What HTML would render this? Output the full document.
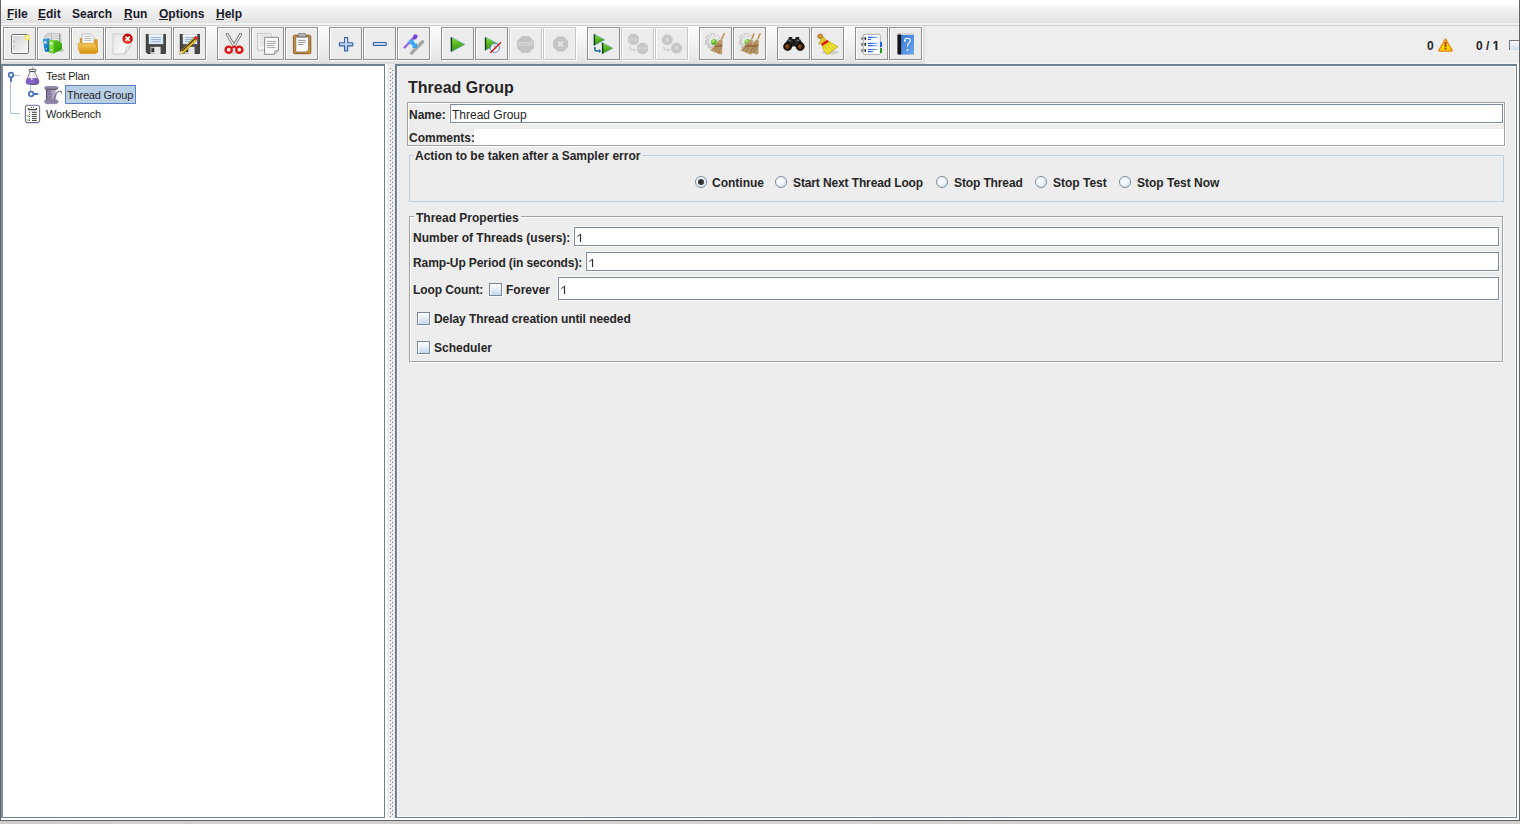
<!DOCTYPE html>
<html><head><meta charset="utf-8">
<style>
*{margin:0;padding:0;box-sizing:border-box}
html,body{width:1520px;height:824px;overflow:hidden;background:linear-gradient(90deg,#cdcdcd,#d4d4d4 50%,#cfcfcf);font-family:"Liberation Sans",sans-serif;color:#262626}
.a{position:absolute}
.t{position:absolute;white-space:nowrap;line-height:12px;font-size:12px}
.b{font-weight:bold}
.r11{font-size:11px;line-height:11px;letter-spacing:-0.2px}
#win{position:absolute;left:0;top:0;width:1520px;height:821px;background:#eeeeee;border-left:1px solid #646464;border-right:1px solid #646464;border-bottom:1px solid #646464}
#menubar{position:absolute;left:1px;top:0;width:1518px;height:25px;background:linear-gradient(#ffffff 0px,#ffffff 3px,#f3f3f3 8px,#e2e2e2 23px,#f2f2f2 23px,#f2f2f2 24px)}
#menuline{position:absolute;left:1px;top:25px;width:1518px;height:1px;background:#cccccc}
.menu{position:absolute;top:8px;font-weight:bold;font-size:12px;line-height:12px;white-space:nowrap;color:#1a1a2a}
.menu u{text-decoration:none;border-bottom:1px solid #222;}
.btn{position:absolute;top:27px;width:33px;height:33px;border:1px solid #8e8e8e;background:#ececec;box-shadow:inset 1px 1px 0 #ffffff,1px 1px 0 #ffffff}
.btn.dis{border-color:#c6c6c6}
.btn svg{position:absolute;left:5px;top:5px}
.panel{position:absolute;top:64px;height:754px}
.etch{position:absolute;border:1px solid #a0a0a0;box-shadow:inset 1px 1px 0 #fff,1px 1px 0 #fff}
.fld{position:absolute;background:#fff;border:1px solid #7b8b9b;box-shadow:-1px -1px 0 #fafafa,1px 1px 0 #fff}
.chk{position:absolute;width:13px;height:13px;border:1px solid #76879b;background:linear-gradient(#ffffff 0%,#f6f9fc 20%,#c4d7eb 100%);box-shadow:inset 1px 1px 0 #fff,1px 1px 0 #fafafa}
.rad{position:absolute;width:12px;height:12px;border-radius:50%;border:1px solid #7b8b9b;background:radial-gradient(circle at 35% 30%,#ffffff 0%,#f0f6fc 45%,#c8dcf0 100%)}
.dots{position:absolute;left:387px;top:64px;width:8px;height:755px;background:#ececec}
</style></head>
<body>
<div id="win"></div>
<div id="menubar"></div>
<div id="menuline"></div>
<div class="menu" style="left:7px">File</div>
<div class="menu" style="left:38px">Edit</div>
<div class="menu" style="left:72px">Search</div>
<div class="menu" style="left:124px">Run</div>
<div class="menu" style="left:159px">Options</div>
<div class="menu" style="left:216px">Help</div>
<div class="a" style="left:7px;top:19px;width:6px;height:1px;background:#2a2a2a"></div>
<div class="a" style="left:38px;top:19px;width:7px;height:1px;background:#2a2a2a"></div>
<div class="a" style="left:124px;top:19px;width:8px;height:1px;background:#2a2a2a"></div>
<div class="a" style="left:159px;top:19px;width:9px;height:1px;background:#2a2a2a"></div>
<div class="a" style="left:216px;top:19px;width:8px;height:1px;background:#2a2a2a"></div>

<!-- toolbar -->
<div class="a" style="left:1px;top:26px;width:924px;height:37px;background:linear-gradient(#ffffff 0px,#fbfbfb 3px,#e6e6e6 34px,#e0e0e0 37px)"></div>
<div class="a" style="left:1px;top:63px;width:924px;height:1px;background:#dedad6"></div>
<div class="a" style="left:923px;top:26px;width:2px;height:37px;background:#e0e0e0"></div>
<div class="a" style="left:925px;top:63px;width:594px;height:1px;background:#f5f5f5"></div>

<div class="btn" style="left:3px"><svg width="22" height="22" viewBox="0 0 22 22"><defs><linearGradient id="gNew" x1="0" y1="0" x2="1" y2="1"><stop offset="0" stop-color="#cfcfcf"/><stop offset="1" stop-color="#fbfbfb"/></linearGradient></defs>
<rect x="2.5" y="1.5" width="17" height="19" rx="1.5" fill="url(#gNew)" stroke="#6e6e6e"/>
<rect x="3.5" y="2.5" width="15" height="17" fill="none" stroke="#fff" stroke-width="0.8"/>
<circle cx="4.8" cy="8.6" r="0.7" fill="#999"/><circle cx="4.8" cy="13.6" r="0.7" fill="#999"/>
<circle cx="18.3" cy="4.4" r="2.1" fill="#fffbe0" stroke="#f2e25a" stroke-width="1.5"/></svg></div>
<div class="btn" style="left:37px"><svg width="22" height="22" viewBox="0 0 22 22"><defs><linearGradient id="gBl" x1="0" y1="0" x2="1" y2="1"><stop offset="0" stop-color="#3aa8f0"/><stop offset="1" stop-color="#0a60b8"/></linearGradient>
<linearGradient id="gGr" x1="0" y1="0" x2="1" y2="1"><stop offset="0" stop-color="#5cc818"/><stop offset="1" stop-color="#2a9a08"/></linearGradient></defs>
<ellipse cx="17.5" cy="17.5" rx="3.5" ry="1.3" fill="#a8a8a8" opacity="0.6"/>
<path d="M1.2 5.5 Q2 2 4.5 0.8 L9 0.6 L9.5 6 L2 7 Z" fill="#e4e4e4" stroke="#9c9c9c" stroke-width="0.6"/>
<path d="M2 3.6 Q3.5 2 6 1.6 M2.2 5 Q4 3.2 8 2.8" stroke="#b0b0b0" stroke-width="0.5" fill="none"/>
<path d="M8.5 1.2 Q9.5 0.3 12 0.3 L16.8 0.4 Q17.8 0.6 17.8 1.6 L17.8 10 L9 9 Z" fill="#e8e8e8" stroke="#9c9c9c" stroke-width="0.6"/>
<path d="M9.5 2.4 H16.8 M9.5 4 H16.8 M9.5 5.6 H16.8" stroke="#b8b8b8" stroke-width="0.5"/>
<path d="M16.6 0.8 V9.5" stroke="#7a8a9a" stroke-width="0.9"/>
<path d="M-0.1 6.1 L6.4 5.3 L6.8 18.9 L2.2 18.8 L1 15 Z" fill="url(#gBl)"/>
<rect x="1.1" y="8.3" width="2.6" height="2.2" fill="#d8ecff"/>
<circle cx="3.2" cy="15.6" r="0.7" fill="#e0f0ff"/>
<path d="M6.1 7.3 L14.6 7.3 L19 10.4 L19 16.5 L10.5 20.6 L6.1 19.7 Z" fill="url(#gGr)"/>
<path d="M6.1 7.3 L10.9 7.3 L10.7 20.4 L6.1 19.7 Z" fill="#7ad83a"/>
<rect x="7.1" y="9.3" width="2.3" height="2.3" fill="#e4ffd0"/>
<circle cx="8.5" cy="16.8" r="0.8" fill="#fff"/></svg></div>
<div class="btn" style="left:71px"><svg width="22" height="22" viewBox="0 0 22 22"><defs><linearGradient id="gFo" x1="0" y1="0" x2="0" y2="1"><stop offset="0" stop-color="#f4cc60"/><stop offset="1" stop-color="#d89008"/></linearGradient></defs>
<path d="M2.8 5 L5.5 5 L5.5 10 L2.8 10 Z M17 6 L20.5 6.5 L21 19 L18 20 Z" fill="#d89a18"/>
<path d="M5.06 1.06 L13.8 1.06 L17 4.5 L17 10.5 L5.06 10.5 Z" fill="#fafafa" stroke="#a0a8b0" stroke-width="0.7"/>
<path d="M7.4 3.6 H13.5 M7.4 5.5 H14.7 M7.4 7.4 H14.7" stroke="#a8a8a8" stroke-width="0.8"/>
<path d="M0.9 10.5 L18 10 Q20.6 14 21 18.8 L18.9 20.6 L3.2 20.6 Q1.2 17 0.9 10.5 Z" fill="url(#gFo)" stroke="#c88810" stroke-width="0.5"/></svg></div>
<div class="btn" style="left:105px"><svg width="22" height="22" viewBox="0 0 22 22"><defs><linearGradient id="gPg" x1="0" y1="0" x2="1" y2="1"><stop offset="0" stop-color="#e6e6e6"/><stop offset="1" stop-color="#ffffff"/></linearGradient>
<radialGradient id="gRd" cx="0.45" cy="0.65" r="0.6"><stop offset="0" stop-color="#ff8030"/><stop offset="0.5" stop-color="#e01818"/><stop offset="1" stop-color="#b00000"/></radialGradient></defs>
<path d="M2 0.9 L20 0.9 L20 12.2 L13.5 21 L2 21 Z" fill="url(#gPg)" stroke="#c4c4c4" stroke-width="0.8"/>
<path d="M20 12.2 L15.5 14.5 L13.5 21 Z" fill="#f4f4f4" stroke="#b8b8b8" stroke-width="0.6"/>
<circle cx="16.6" cy="5.7" r="5.4" fill="url(#gRd)" stroke="#fff" stroke-width="0.5"/>
<path d="M14.5 3.6 L18.7 7.8 M18.7 3.6 L14.5 7.8" stroke="#fff" stroke-width="1.6"/></svg></div>
<div class="btn" style="left:139px"><svg width="22" height="22" viewBox="0 0 22 22"><path d="M0.8 1.6 Q0.8 0.9 1.5 0.9 L20.2 0.9 Q20.9 0.9 20.9 1.6 L20.9 20.3 Q20.9 21 20.2 21 L2.8 21 L0.8 19 Z" fill="#333"/>
<path d="M1.5 1.5 L20.2 1.5 L20.2 20.3 L3 20.3 L1.5 18.8 Z" fill="#484848"/>
<rect x="3.8" y="1.4" width="14.4" height="9.7" fill="#dde9f5"/>
<rect x="3.8" y="1.4" width="14.4" height="2" fill="#f4f8fc"/>
<path d="M6.2 4.5 H15.8 M6.2 6.5 H15.8 M6.2 8.6 H15.8" stroke="#88a6cc" stroke-width="0.8"/>
<rect x="5.5" y="13.9" width="9.9" height="7.1" fill="#c8c8c8"/>
<rect x="10" y="13.9" width="5.4" height="7.1" fill="#e8e8e8"/>
<rect x="6.4" y="15.2" width="2.7" height="3.8" fill="#333"/></svg></div>
<div class="btn" style="left:173px"><svg width="22" height="22" viewBox="0 0 22 22"><path d="M0.8 1.6 Q0.8 0.9 1.5 0.9 L20.2 0.9 Q20.9 0.9 20.9 1.6 L20.9 20.3 Q20.9 21 20.2 21 L2.8 21 L0.8 19 Z" fill="#333"/>
<path d="M1.5 1.5 L20.2 1.5 L20.2 20.3 L3 20.3 L1.5 18.8 Z" fill="#484848"/>
<rect x="3.8" y="1.4" width="14.4" height="9.7" fill="#dde9f5"/>
<rect x="3.8" y="1.4" width="14.4" height="2" fill="#f4f8fc"/>
<path d="M6.2 4.5 H15.8 M6.2 6.5 H15.8 M6.2 8.6 H15.8" stroke="#88a6cc" stroke-width="0.8"/>
<rect x="5.5" y="13.9" width="9.9" height="7.1" fill="#c8c8c8"/>
<rect x="10" y="13.9" width="5.4" height="7.1" fill="#e8e8e8"/>
<rect x="6.4" y="15.2" width="2.7" height="3.8" fill="#333"/><path d="M0.6 21.4 L2 17.5 L15 4.6 L17.7 7.3 L4.6 20.2 Z" fill="#f0c020" stroke="#7a6010" stroke-width="0.5"/>
<path d="M2.6 18.4 L16 5.6" stroke="#222" stroke-width="1.1"/>
<path d="M15 4.6 L16.3 3.3 Q17 2.8 17.6 3.4 L18.9 4.7 Q19.4 5.3 18.9 5.9 L17.7 7.3 Z" fill="#e02020"/>
<path d="M0.6 21.4 L2 17.5 L4.6 20.2 Z" fill="#e8d0a0"/></svg></div>
<div class="btn" style="left:217px"><svg width="22" height="22" viewBox="0 0 22 22"><path d="M4.3 1.3 L10.9 12.6 M17.6 1.3 L11.1 12.6" stroke="#6a6a6a" stroke-width="3" stroke-linecap="round"/>
<path d="M4.3 1.3 L10.9 12.6 M17.6 1.3 L11.1 12.6" stroke="#e6e6e6" stroke-width="1.5" stroke-linecap="round"/>
<ellipse cx="11" cy="20" rx="6" ry="1.2" fill="#c8c8c8" opacity="0.6"/>
<circle cx="5.7" cy="16.7" r="3.1" fill="none" stroke="#e01212" stroke-width="2.4"/>
<circle cx="16.3" cy="16.7" r="3.1" fill="none" stroke="#e01212" stroke-width="2.4"/>
<path d="M8.2 14.2 L11 12.2 L13.8 14.2 L12 15.5 L11 14.6 L10 15.5 Z" fill="#e01212"/></svg></div>
<div class="btn" style="left:251px"><svg width="22" height="22" viewBox="0 0 22 22"><path d="M0.6 0.6 H13.6 Q14.3 0.6 14.3 1.3 V17.2 H0.6 Z" fill="#f2f2f2" stroke="#b8b8b8" stroke-width="0.8"/>
<path d="M2.8 4.3 H6.9 M2.8 6.3 H6.9 M2.8 8.4 H6.9 M2.8 10.4 H6.9 M2.8 12.5 H6.9 M2.8 2.6 H11" stroke="#d0d0d0" stroke-width="0.6"/>
<path d="M7.6 4.3 H21 Q21.5 4.3 21.5 4.8 V17.2 L17.2 21.3 H7.6 Z" fill="#fafafa" stroke="#7c7c7c" stroke-width="0.9"/>
<path d="M21.5 17.2 L18 17.6 L17.2 21.3 Z" fill="#e0e0e0" stroke="#8a8a8a" stroke-width="0.6"/>
<path d="M10 8.4 H18.9 M10 10.4 H18.9 M10 12.5 H17 M10 14.6 H18.5" stroke="#909090" stroke-width="0.8"/></svg></div>
<div class="btn" style="left:285px"><svg width="22" height="22" viewBox="0 0 22 22"><rect x="2.4" y="2.2" width="17.4" height="18.5" rx="1.2" fill="#cc8c30" stroke="#7a4e10" stroke-width="0.8"/>
<path d="M4.8 4 H17.6 V16.5 L15 19 H4.8 Z" fill="#fdfdfd" stroke="#6c6c6c" stroke-width="0.8"/>
<path d="M17.6 16.5 L15.4 16.8 L15 19 Z" fill="#d8d8d8"/>
<path d="M7.1 7.4 H14.6 M7.1 9.4 H14.6 M7.1 11.5 H12.4" stroke="#8a8a8a" stroke-width="0.9"/>
<path d="M6.6 3.9 L7.6 1 Q8 0.2 9 0.2 H13 Q14 0.2 14.4 1 L15.3 3.9 Z" fill="#b4b4b4" stroke="#5a5a5a" stroke-width="0.7"/></svg></div>
<div class="btn" style="left:329px"><svg width="22" height="22" viewBox="0 0 22 22"><defs><linearGradient id="gPl" x1="0" y1="0" x2="0" y2="1"><stop offset="0" stop-color="#e8f0fa"/><stop offset="1" stop-color="#a0bce0"/></linearGradient></defs>
<path d="M9.9 4.6 H12.3 Q12.7 4.6 12.7 5 V9.7 H17.4 Q17.8 9.7 17.8 10.1 V12.5 Q17.8 12.9 17.4 12.9 H12.7 V17.6 Q12.7 18 12.3 18 H9.9 Q9.5 18 9.5 17.6 V12.9 H4.8 Q4.4 12.9 4.4 12.5 V10.1 Q4.4 9.7 4.8 9.7 H9.5 V5 Q9.5 4.6 9.9 4.6 Z" fill="url(#gPl)" stroke="#2c5fa8" stroke-width="1.1"/></svg></div>
<div class="btn" style="left:363px"><svg width="22" height="22" viewBox="0 0 22 22"><defs><linearGradient id="gMi" x1="0" y1="0" x2="0" y2="1"><stop offset="0" stop-color="#e8f0fa"/><stop offset="1" stop-color="#a0bce0"/></linearGradient></defs>
<rect x="4.3" y="9.5" width="13" height="3" rx="0.8" fill="url(#gMi)" stroke="#2c5fa8" stroke-width="1.1"/></svg></div>
<div class="btn" style="left:397px"><svg width="22" height="22" viewBox="0 0 22 22"><path d="M8.6 20 L19.6 8.8" stroke="#a6a6a6" stroke-width="3.4" stroke-linecap="round"/>
<path d="M1.6 14.4 L10.5 4.8" stroke="#8a58e0" stroke-width="2.2" stroke-linecap="round"/>
<path d="M2.2 13.2 L9.5 5.5" stroke="#b898f0" stroke-width="0.6"/>
<circle cx="12.4" cy="3.4" r="2.2" fill="#7444dc"/>
<path d="M9.5 5 L12 2.6 L14.2 4.8 L11.6 7 Z" fill="#7848dc"/>
<rect x="6.2" y="6.8" width="4.3" height="4.3" fill="#36a6f4"/>
<rect x="9.6" y="10.6" width="4.4" height="4.4" fill="#30a0f0"/>
<rect x="8.3" y="8.8" width="3.4" height="3.4" fill="#30a0f0"/>
<circle cx="8.3" cy="8.9" r="0.6" fill="#8ad0ff"/><circle cx="11.9" cy="12.8" r="0.6" fill="#8ad0ff"/></svg></div>
<div class="btn" style="left:441px"><svg width="22" height="22" viewBox="0 0 22 22"><defs><linearGradient id="gSt1" x1="0" y1="0" x2="0.3" y2="1"><stop offset="0" stop-color="#8ae838"/><stop offset="1" stop-color="#309010"/></linearGradient></defs>
<path d="M3.9 3.9 L18 11.399999999999999 L3.9 18.9 Z" fill="url(#gSt1)" stroke="#70a8d8" stroke-width="0.6"/>
<path d="M4.5 4.5 L4.5 18.299999999999997" stroke="#153a15" stroke-width="1.3"/></svg></div>
<div class="btn" style="left:475px"><svg width="22" height="22" viewBox="0 0 22 22"><defs><linearGradient id="gSt2" x1="0" y1="0" x2="0.3" y2="1"><stop offset="0" stop-color="#8ae838"/><stop offset="1" stop-color="#309010"/></linearGradient></defs>
<path d="M4 3.9 L17.1 10.75 L4 17.6 Z" fill="url(#gSt2)" stroke="#70a8d8" stroke-width="0.6"/>
<path d="M4.6 4.5 L4.6 17.0" stroke="#153a15" stroke-width="1.3"/><circle cx="13.9" cy="14.8" r="4.6" fill="#f4f8fc" fill-opacity="0.85" stroke="#4a7ec0" stroke-width="0.9"/>
<path d="M13.9 12 V14.8 L15.5 15.8" stroke="#6a8ab0" stroke-width="0.7" fill="none"/>
<path d="M9.4 19.8 L19.9 9.35" stroke="#e00000" stroke-width="1.3"/></svg></div>
<div class="btn dis" style="left:509px"><svg width="22" height="22" viewBox="0 0 22 22"><path d="M6.98 2.90 L14.02 2.90 L19.00 7.88 L19.00 14.92 L14.02 19.90 L6.98 19.90 L2.00 14.92 L2.00 7.88 Z" fill="#c4c4c4"/><text x="10.5" y="13.4" text-anchor="middle" font-family="Liberation Sans" font-weight="bold" font-size="5.6" fill="#dedede">STOP</text></svg></div>
<div class="btn dis" style="left:543px"><svg width="22" height="22" viewBox="0 0 22 22"><path d="M8.49 3.50 L14.71 3.50 L19.10 7.89 L19.10 14.11 L14.71 18.50 L8.49 18.50 L4.10 14.11 L4.10 7.89 Z" fill="#c4c4c4"/><path d="M9.2 8.6 L14 13.4 M14 8.6 L9.2 13.4" stroke="#e4e4e4" stroke-width="2"/></svg></div>
<div class="btn" style="left:587px"><svg width="22" height="22" viewBox="0 0 22 22"><defs><linearGradient id="gSt3" x1="0" y1="0" x2="0.3" y2="1"><stop offset="0" stop-color="#8ae838"/><stop offset="1" stop-color="#309010"/></linearGradient></defs>
<path d="M0.9 0.9 L11.8 6.8500000000000005 L0.9 12.8 Z" fill="url(#gSt3)" stroke="#70a8d8" stroke-width="0.6"/>
<path d="M1.5 1.5 L1.5 12.200000000000001" stroke="#153a15" stroke-width="1.3"/><defs><linearGradient id="gSt4" x1="0" y1="0" x2="0.3" y2="1"><stop offset="0" stop-color="#8ae838"/><stop offset="1" stop-color="#309010"/></linearGradient></defs>
<path d="M9.1 9.4 L20 15.2 L9.1 21 Z" fill="url(#gSt4)" stroke="#70a8d8" stroke-width="0.6"/>
<path d="M9.7 10.0 L9.7 20.4" stroke="#153a15" stroke-width="1.3"/><path d="M1.9 14 V16.6 Q2 18 3.5 18 H6.5" stroke="#1a6a90" stroke-width="1.6" fill="none"/>
<path d="M6 16 L8.3 18 L6 20 Z" fill="#1a6a90"/></svg></div>
<div class="btn dis" style="left:621px"><svg width="22" height="22" viewBox="0 0 22 22"><path d="M4.17 0.85 L8.73 0.85 L11.95 4.07 L11.95 8.63 L8.73 11.85 L4.17 11.85 L0.95 8.63 L0.95 4.07 Z" fill="#c6c6c6"/><path d="M13.17 9.90 L17.73 9.90 L20.95 13.12 L20.95 17.68 L17.73 20.90 L13.17 20.90 L9.95 17.68 L9.95 13.12 Z" fill="#c6c6c6"/><text x="6.45" y="7.6" text-anchor="middle" font-family="Liberation Sans" font-weight="bold" font-size="3.6" fill="#dadada">STOP</text>
<text x="15.45" y="16.6" text-anchor="middle" font-family="Liberation Sans" font-weight="bold" font-size="3.6" fill="#dadada">STOP</text>
<path d="M2.9 13 V15.3 Q3 16.8 4.5 16.8 H7.6" stroke="#c8c8c8" stroke-width="1.2" fill="none"/>
<path d="M7.3 15.2 L9 16.8 L7.3 18.4 Z" fill="#c8c8c8"/></svg></div>
<div class="btn dis" style="left:655px"><svg width="22" height="22" viewBox="0 0 22 22"><path d="M4.23 1.60 L8.57 1.60 L11.65 4.68 L11.65 9.02 L8.57 12.10 L4.23 12.10 L1.15 9.02 L1.15 4.68 Z" fill="#c6c6c6"/><path d="M13.33 9.80 L17.67 9.80 L20.75 12.88 L20.75 17.22 L17.67 20.30 L13.33 20.30 L10.25 17.22 L10.25 12.88 Z" fill="#c6c6c6"/><path d="M4.9 5.3 L7.9 8.3 M7.9 5.3 L4.9 8.3 M14 13.5 L17 16.5 M17 13.5 L14 16.5" stroke="#dedede" stroke-width="1.4"/>
<path d="M2.9 13.2 V15.3 Q3 16.8 4.5 16.8 H7.6" stroke="#c8c8c8" stroke-width="1.2" fill="none"/>
<path d="M7.3 15.2 L9 16.8 L7.3 18.4 Z" fill="#c8c8c8"/></svg></div>
<div class="btn" style="left:699px"><svg width="22" height="22" viewBox="0 0 22 22"><defs><linearGradient id="gGear" x1="1" y1="0" x2="0" y2="1"><stop offset="0" stop-color="#fafafa"/><stop offset="1" stop-color="#c4c4c4"/></linearGradient></defs><path d="M5.85 0.42 L9.55 0.42 L9.47 2.67 L10.77 3.30 L12.47 1.83 L14.78 4.73 L12.97 6.06 L13.29 7.46 L15.50 7.88 L14.67 11.49 L12.50 10.91 L11.60 12.04 L12.66 14.02 L9.32 15.63 L8.42 13.57 L6.98 13.57 L6.08 15.63 L2.74 14.02 L3.80 12.04 L2.90 10.91 L0.73 11.49 L-0.10 7.88 L2.11 7.46 L2.43 6.06 L0.62 4.73 L2.93 1.83 L4.63 3.30 L5.93 2.67 Z" fill="url(#gGear)" stroke="#b4b4b4" stroke-width="0.6"/><circle cx="7.7" cy="8" r="3.8" fill="#f0f0f0" stroke="#d0d0d0" stroke-width="0.5"/><defs><radialGradient id="gBall" cx="0.4" cy="0.35" r="0.7"><stop offset="0" stop-color="#b0f070"/><stop offset="1" stop-color="#30a010"/></radialGradient></defs><circle cx="8.9" cy="8.9" r="2.9" fill="url(#gBall)"/><path d="M19.5 0.2 L16.3 6.7" stroke="#c49050" stroke-width="1.6"/>
<path d="M13.2 8 L15.8 6.2 L17.6 7.6 L17.1 21 L15.4 21.5 L5.4 17.6 Z" fill="#bc9a6a"/>
<path d="M8 17.5 L14 10 M10.5 19 L15.5 10.5 M13.5 20.5 L16.5 11" stroke="#8a6a40" stroke-width="0.7"/>
<path d="M10 13.5 L17.4 12.6" stroke="#7a4a20" stroke-width="0.8"/></svg></div>
<div class="btn" style="left:733px"><svg width="22" height="22" viewBox="0 0 22 22"><defs><linearGradient id="gGear" x1="1" y1="0" x2="0" y2="1"><stop offset="0" stop-color="#fafafa"/><stop offset="1" stop-color="#c4c4c4"/></linearGradient></defs><path d="M5.35 0.42 L9.05 0.42 L8.97 2.67 L10.27 3.30 L11.97 1.83 L14.28 4.73 L12.47 6.06 L12.79 7.46 L15.00 7.88 L14.17 11.49 L12.00 10.91 L11.10 12.04 L12.16 14.02 L8.82 15.63 L7.92 13.57 L6.48 13.57 L5.58 15.63 L2.24 14.02 L3.30 12.04 L2.40 10.91 L0.23 11.49 L-0.60 7.88 L1.61 7.46 L1.93 6.06 L0.12 4.73 L2.43 1.83 L4.13 3.30 L5.43 2.67 Z" fill="url(#gGear)" stroke="#b4b4b4" stroke-width="0.6"/><circle cx="7.2" cy="8" r="3.8" fill="#f0f0f0" stroke="#d0d0d0" stroke-width="0.5"/><circle cx="8.4" cy="8.9" r="2.9" fill="url(#gBall)"/><path d="M15.06 0.2 L12.7 6.3 M21.4 0.2 L18.75 6.3" stroke="#c49050" stroke-width="1.5"/>
<path d="M9.6 8 L12 6.2 L13.8 7.6 L13.1 21 L11.4 21.5 L1.4 17.6 Z" fill="#bc9a6a"/>
<path d="M15.7 8 L18 6.2 L19.8 7.6 L19.2 21 L17.4 21.5 L7.9 17.6 Z" fill="#b49464"/>
<path d="M4 17.5 L10 10 M6.5 19 L11.5 10.5 M11 20 L17 10 M14 20.5 L18.5 11" stroke="#8a6a40" stroke-width="0.7"/>
<path d="M6 13.5 L13.4 12.6 M12 13.5 L19.4 12.6" stroke="#7a4a20" stroke-width="0.8"/></svg></div>
<div class="btn" style="left:777px"><svg width="22" height="22" viewBox="0 0 22 22"><defs><radialGradient id="gLens" cx="0.4" cy="0.4" r="0.6"><stop offset="0" stop-color="#a05818"/><stop offset="1" stop-color="#3a1600"/></radialGradient></defs>
<path d="M5.6 4 H9.3 V7 H5.6 Z M12.4 4 H16.3 V7 H12.4 Z" fill="#222"/>
<path d="M8 6 H14.1 V13.2 H8 Z" fill="#1a1a1a"/>
<path d="M4.5 6.5 L9.5 6 L9.8 14 L0.2 14 Z" fill="#2a2a2a"/>
<path d="M12.2 6 L17.3 6.5 L21.8 14 L12 14 Z" fill="#2a2a2a"/>
<circle cx="4.6" cy="13.5" r="4.4" fill="#111"/><circle cx="17.2" cy="13.5" r="4.4" fill="#111"/>
<circle cx="4.6" cy="13.7" r="2.7" fill="url(#gLens)"/><circle cx="17.2" cy="13.7" r="2.7" fill="url(#gLens)"/>
<path d="M5.5 7.5 L8 7.3 M13.5 7.3 L16 7.5" stroke="#888" stroke-width="0.8"/></svg></div>
<div class="btn" style="left:811px"><svg width="22" height="22" viewBox="0 0 22 22"><defs><linearGradient id="gYel" x1="0" y1="0" x2="1" y2="1"><stop offset="0" stop-color="#d8c000"/><stop offset="0.5" stop-color="#f4e840"/><stop offset="1" stop-color="#d0b800"/></linearGradient></defs>
<ellipse cx="13" cy="19.3" rx="8.5" ry="2" fill="#bcbcbc" opacity="0.7"/>
<ellipse cx="3.2" cy="3.3" rx="2.6" ry="2.4" fill="#c88a30" stroke="#a06010" stroke-width="0.5"/>
<ellipse cx="3.3" cy="3.3" rx="1" ry="1.3" fill="#e0a040"/>
<path d="M4 5.2 L7 4.4 L9.5 7.5 L3.5 11 L1.2 10.8 Q1.5 9.6 3 8.8 Z" fill="#dcc828" stroke="#a89000" stroke-width="0.5"/>
<path d="M5.3 11.5 L11.4 8 L20.9 13.7 L10.5 21.7 L6.2 16.7 Z" fill="url(#gYel)" stroke="#b09c00" stroke-width="0.6"/>
<path d="M4 10.9 L10.4 6.7 L11.7 8.9 L5.2 13.1 Z" fill="#e01818"/>
<path d="M8 13 L12 20 M10 11.5 L15.5 18 M12.5 10.3 L18 15.5" stroke="#c4ac00" stroke-width="0.5"/></svg></div>
<div class="btn" style="left:855px"><svg width="22" height="22" viewBox="0 0 22 22"><defs><linearGradient id="gLn" x1="0" y1="0" x2="1" y2="0"><stop offset="0" stop-color="#0048e0"/><stop offset="1" stop-color="#a0c4ff"/></linearGradient></defs>
<rect x="2.3" y="1.4" width="17" height="20" rx="1" fill="#fff" stroke="#9a9a9a" stroke-width="0.8"/>
<rect x="19.1" y="8.9" width="1.9" height="5" fill="#1a5ae8"/><rect x="19.1" y="15" width="1.9" height="5" fill="#1a9a10"/>
<path d="M0 4.2 H2 V6.8 H0 Z M0 10.1 H2 V12.7 H0 Z M0 16.2 H2 V18.8 H0 Z" fill="#888"/>
<path d="M3.5 4.2 H5 V6.8 H3.5 Z M3.5 10.1 H5 V12.7 H3.5 Z M3.5 16.2 H5 V18.8 H3.5 Z" fill="#111"/>
<path d="M6.9 4.3 H16.9 M6.9 6.5 H10 M6.9 10.4 H16.9 M6.9 12.6 H16.9 M6.9 16.5 H16.9 M6.9 18.7 H11.9" stroke="url(#gLn)" stroke-width="1.2"/></svg></div>
<div class="btn" style="left:889px"><svg width="22" height="22" viewBox="0 0 22 22"><defs><linearGradient id="gBk" x1="0" y1="0" x2="1" y2="1"><stop offset="0" stop-color="#3a7ad8"/><stop offset="1" stop-color="#6aa4ec"/></linearGradient>
<linearGradient id="gSpn" x1="0" y1="0" x2="1" y2="0"><stop offset="0" stop-color="#3a3a3a"/><stop offset="0.4" stop-color="#0a0a0a"/><stop offset="1" stop-color="#202020"/></linearGradient></defs>
<ellipse cx="11" cy="21.3" rx="8" ry="0.7" fill="#c8c8c8"/>
<path d="M3.5 0.4 H18.2 Q19 0.4 19 1.2 V2.4 H2.3 V1.6 Q2.3 0.4 3.5 0.4 Z" fill="#d8dadc" stroke="#a8acb0" stroke-width="0.4"/>
<rect x="6" y="2" width="13" height="19.4" fill="url(#gBk)"/>
<path d="M3.3 1.6 H6.2 V21.4 H3.3 Q2.3 21.4 2.3 20.4 V2.6 Q2.3 1.6 3.3 1.6 Z" fill="url(#gSpn)"/>
<path d="M9.8 8 Q9.4 5.2 12.4 5.2 Q15.4 5.2 15.2 7.8 Q15 9.6 13.4 10.6 Q12.4 11.5 12.5 13.8" stroke="#fff" stroke-width="1.1" fill="none"/>
<circle cx="9.9" cy="7.9" r="0.9" fill="#fff"/>
<circle cx="12.5" cy="16.9" r="0.95" fill="#fff"/></svg></div>

<!-- status -->
<div class="t b" style="left:1427px;top:40px">0</div>
<div class="t b" style="left:1476px;top:40px">0 /</div><svg class="a" style="left:1491px;top:40px" width="8" height="11" viewBox="0 0 8 11"><path d="M5.4 1 V10" stroke="#262626" stroke-width="1.9"/><path d="M2.4 3.3 Q3.8 2.8 4.8 1.1" stroke="#262626" stroke-width="1.4" fill="none"/></svg>
<div class="a" style="left:1509px;top:40px;width:10px;height:10px;border-top:1px solid #777;border-left:1px solid #777;background:linear-gradient(#fafcff,#cfdcec)"></div>

<!-- split pane -->
<div class="panel" style="left:1px;width:384px;background:#fff;border-top:2px solid #6e8193;border-left:2px solid #7d8e9e;border-right:1px solid #6e8193;border-bottom:1px solid #6e8193"></div>
<div class="a" style="left:385px;top:64px;width:2px;height:755px;background:#fff"></div>
<div class="dots" id="dots"></div>
<div class="panel" style="left:395px;width:1122px;background:#ededed;border-top:2px solid #6e8193;border-left:2px solid #6e8193;border-right:1px solid #6e8193;border-bottom:1px solid #6e8193;box-shadow:inset 1px 1px 0 #f8f8f8,inset -1px -1px 0 #f8f8f8"></div>
<div class="a" style="left:1517px;top:64px;width:2px;height:755px;background:#fff"></div>
<div class="a" style="left:1px;top:818px;width:1518px;height:2px;background:#fff"></div>

<!-- tree -->
<svg class="a" style="left:387px;top:64px" width="8" height="755"><rect x="3" y="4" width="1" height="1" fill="#6a7a8a"/><rect x="2" y="3" width="1" height="1" fill="#ffffff"/><rect x="5" y="6" width="1" height="1" fill="#6a7a8a"/><rect x="4" y="5" width="1" height="1" fill="#ffffff"/><rect x="3" y="8" width="1" height="1" fill="#6a7a8a"/><rect x="2" y="7" width="1" height="1" fill="#ffffff"/><rect x="5" y="10" width="1" height="1" fill="#6a7a8a"/><rect x="4" y="9" width="1" height="1" fill="#ffffff"/><rect x="3" y="12" width="1" height="1" fill="#6a7a8a"/><rect x="2" y="11" width="1" height="1" fill="#ffffff"/><rect x="5" y="14" width="1" height="1" fill="#6a7a8a"/><rect x="4" y="13" width="1" height="1" fill="#ffffff"/><rect x="3" y="16" width="1" height="1" fill="#6a7a8a"/><rect x="2" y="15" width="1" height="1" fill="#ffffff"/><rect x="5" y="18" width="1" height="1" fill="#6a7a8a"/><rect x="4" y="17" width="1" height="1" fill="#ffffff"/><rect x="3" y="20" width="1" height="1" fill="#6a7a8a"/><rect x="2" y="19" width="1" height="1" fill="#ffffff"/><rect x="5" y="22" width="1" height="1" fill="#6a7a8a"/><rect x="4" y="21" width="1" height="1" fill="#ffffff"/><rect x="3" y="24" width="1" height="1" fill="#6a7a8a"/><rect x="2" y="23" width="1" height="1" fill="#ffffff"/><rect x="5" y="26" width="1" height="1" fill="#6a7a8a"/><rect x="4" y="25" width="1" height="1" fill="#ffffff"/><rect x="3" y="28" width="1" height="1" fill="#6a7a8a"/><rect x="2" y="27" width="1" height="1" fill="#ffffff"/><rect x="5" y="30" width="1" height="1" fill="#6a7a8a"/><rect x="4" y="29" width="1" height="1" fill="#ffffff"/><rect x="3" y="32" width="1" height="1" fill="#6a7a8a"/><rect x="2" y="31" width="1" height="1" fill="#ffffff"/><rect x="5" y="34" width="1" height="1" fill="#6a7a8a"/><rect x="4" y="33" width="1" height="1" fill="#ffffff"/><rect x="3" y="36" width="1" height="1" fill="#6a7a8a"/><rect x="2" y="35" width="1" height="1" fill="#ffffff"/><rect x="5" y="38" width="1" height="1" fill="#6a7a8a"/><rect x="4" y="37" width="1" height="1" fill="#ffffff"/><rect x="3" y="40" width="1" height="1" fill="#6a7a8a"/><rect x="2" y="39" width="1" height="1" fill="#ffffff"/><rect x="5" y="42" width="1" height="1" fill="#6a7a8a"/><rect x="4" y="41" width="1" height="1" fill="#ffffff"/><rect x="3" y="44" width="1" height="1" fill="#6a7a8a"/><rect x="2" y="43" width="1" height="1" fill="#ffffff"/><rect x="5" y="46" width="1" height="1" fill="#6a7a8a"/><rect x="4" y="45" width="1" height="1" fill="#ffffff"/><rect x="3" y="48" width="1" height="1" fill="#6a7a8a"/><rect x="2" y="47" width="1" height="1" fill="#ffffff"/><rect x="5" y="50" width="1" height="1" fill="#6a7a8a"/><rect x="4" y="49" width="1" height="1" fill="#ffffff"/><rect x="3" y="52" width="1" height="1" fill="#6a7a8a"/><rect x="2" y="51" width="1" height="1" fill="#ffffff"/><rect x="5" y="54" width="1" height="1" fill="#6a7a8a"/><rect x="4" y="53" width="1" height="1" fill="#ffffff"/><rect x="3" y="56" width="1" height="1" fill="#6a7a8a"/><rect x="2" y="55" width="1" height="1" fill="#ffffff"/><rect x="5" y="58" width="1" height="1" fill="#6a7a8a"/><rect x="4" y="57" width="1" height="1" fill="#ffffff"/><rect x="3" y="60" width="1" height="1" fill="#6a7a8a"/><rect x="2" y="59" width="1" height="1" fill="#ffffff"/><rect x="5" y="62" width="1" height="1" fill="#6a7a8a"/><rect x="4" y="61" width="1" height="1" fill="#ffffff"/><rect x="3" y="64" width="1" height="1" fill="#6a7a8a"/><rect x="2" y="63" width="1" height="1" fill="#ffffff"/><rect x="5" y="66" width="1" height="1" fill="#6a7a8a"/><rect x="4" y="65" width="1" height="1" fill="#ffffff"/><rect x="3" y="68" width="1" height="1" fill="#6a7a8a"/><rect x="2" y="67" width="1" height="1" fill="#ffffff"/><rect x="5" y="70" width="1" height="1" fill="#6a7a8a"/><rect x="4" y="69" width="1" height="1" fill="#ffffff"/><rect x="3" y="72" width="1" height="1" fill="#6a7a8a"/><rect x="2" y="71" width="1" height="1" fill="#ffffff"/><rect x="5" y="74" width="1" height="1" fill="#6a7a8a"/><rect x="4" y="73" width="1" height="1" fill="#ffffff"/><rect x="3" y="76" width="1" height="1" fill="#6a7a8a"/><rect x="2" y="75" width="1" height="1" fill="#ffffff"/><rect x="5" y="78" width="1" height="1" fill="#6a7a8a"/><rect x="4" y="77" width="1" height="1" fill="#ffffff"/><rect x="3" y="80" width="1" height="1" fill="#6a7a8a"/><rect x="2" y="79" width="1" height="1" fill="#ffffff"/><rect x="5" y="82" width="1" height="1" fill="#6a7a8a"/><rect x="4" y="81" width="1" height="1" fill="#ffffff"/><rect x="3" y="84" width="1" height="1" fill="#6a7a8a"/><rect x="2" y="83" width="1" height="1" fill="#ffffff"/><rect x="5" y="86" width="1" height="1" fill="#6a7a8a"/><rect x="4" y="85" width="1" height="1" fill="#ffffff"/><rect x="3" y="88" width="1" height="1" fill="#6a7a8a"/><rect x="2" y="87" width="1" height="1" fill="#ffffff"/><rect x="5" y="90" width="1" height="1" fill="#6a7a8a"/><rect x="4" y="89" width="1" height="1" fill="#ffffff"/><rect x="3" y="92" width="1" height="1" fill="#6a7a8a"/><rect x="2" y="91" width="1" height="1" fill="#ffffff"/><rect x="5" y="94" width="1" height="1" fill="#6a7a8a"/><rect x="4" y="93" width="1" height="1" fill="#ffffff"/><rect x="3" y="96" width="1" height="1" fill="#6a7a8a"/><rect x="2" y="95" width="1" height="1" fill="#ffffff"/><rect x="5" y="98" width="1" height="1" fill="#6a7a8a"/><rect x="4" y="97" width="1" height="1" fill="#ffffff"/><rect x="3" y="100" width="1" height="1" fill="#6a7a8a"/><rect x="2" y="99" width="1" height="1" fill="#ffffff"/><rect x="5" y="102" width="1" height="1" fill="#6a7a8a"/><rect x="4" y="101" width="1" height="1" fill="#ffffff"/><rect x="3" y="104" width="1" height="1" fill="#6a7a8a"/><rect x="2" y="103" width="1" height="1" fill="#ffffff"/><rect x="5" y="106" width="1" height="1" fill="#6a7a8a"/><rect x="4" y="105" width="1" height="1" fill="#ffffff"/><rect x="3" y="108" width="1" height="1" fill="#6a7a8a"/><rect x="2" y="107" width="1" height="1" fill="#ffffff"/><rect x="5" y="110" width="1" height="1" fill="#6a7a8a"/><rect x="4" y="109" width="1" height="1" fill="#ffffff"/><rect x="3" y="112" width="1" height="1" fill="#6a7a8a"/><rect x="2" y="111" width="1" height="1" fill="#ffffff"/><rect x="5" y="114" width="1" height="1" fill="#6a7a8a"/><rect x="4" y="113" width="1" height="1" fill="#ffffff"/><rect x="3" y="116" width="1" height="1" fill="#6a7a8a"/><rect x="2" y="115" width="1" height="1" fill="#ffffff"/><rect x="5" y="118" width="1" height="1" fill="#6a7a8a"/><rect x="4" y="117" width="1" height="1" fill="#ffffff"/><rect x="3" y="120" width="1" height="1" fill="#6a7a8a"/><rect x="2" y="119" width="1" height="1" fill="#ffffff"/><rect x="5" y="122" width="1" height="1" fill="#6a7a8a"/><rect x="4" y="121" width="1" height="1" fill="#ffffff"/><rect x="3" y="124" width="1" height="1" fill="#6a7a8a"/><rect x="2" y="123" width="1" height="1" fill="#ffffff"/><rect x="5" y="126" width="1" height="1" fill="#6a7a8a"/><rect x="4" y="125" width="1" height="1" fill="#ffffff"/><rect x="3" y="128" width="1" height="1" fill="#6a7a8a"/><rect x="2" y="127" width="1" height="1" fill="#ffffff"/><rect x="5" y="130" width="1" height="1" fill="#6a7a8a"/><rect x="4" y="129" width="1" height="1" fill="#ffffff"/><rect x="3" y="132" width="1" height="1" fill="#6a7a8a"/><rect x="2" y="131" width="1" height="1" fill="#ffffff"/><rect x="5" y="134" width="1" height="1" fill="#6a7a8a"/><rect x="4" y="133" width="1" height="1" fill="#ffffff"/><rect x="3" y="136" width="1" height="1" fill="#6a7a8a"/><rect x="2" y="135" width="1" height="1" fill="#ffffff"/><rect x="5" y="138" width="1" height="1" fill="#6a7a8a"/><rect x="4" y="137" width="1" height="1" fill="#ffffff"/><rect x="3" y="140" width="1" height="1" fill="#6a7a8a"/><rect x="2" y="139" width="1" height="1" fill="#ffffff"/><rect x="5" y="142" width="1" height="1" fill="#6a7a8a"/><rect x="4" y="141" width="1" height="1" fill="#ffffff"/><rect x="3" y="144" width="1" height="1" fill="#6a7a8a"/><rect x="2" y="143" width="1" height="1" fill="#ffffff"/><rect x="5" y="146" width="1" height="1" fill="#6a7a8a"/><rect x="4" y="145" width="1" height="1" fill="#ffffff"/><rect x="3" y="148" width="1" height="1" fill="#6a7a8a"/><rect x="2" y="147" width="1" height="1" fill="#ffffff"/><rect x="5" y="150" width="1" height="1" fill="#6a7a8a"/><rect x="4" y="149" width="1" height="1" fill="#ffffff"/><rect x="3" y="152" width="1" height="1" fill="#6a7a8a"/><rect x="2" y="151" width="1" height="1" fill="#ffffff"/><rect x="5" y="154" width="1" height="1" fill="#6a7a8a"/><rect x="4" y="153" width="1" height="1" fill="#ffffff"/><rect x="3" y="156" width="1" height="1" fill="#6a7a8a"/><rect x="2" y="155" width="1" height="1" fill="#ffffff"/><rect x="5" y="158" width="1" height="1" fill="#6a7a8a"/><rect x="4" y="157" width="1" height="1" fill="#ffffff"/><rect x="3" y="160" width="1" height="1" fill="#6a7a8a"/><rect x="2" y="159" width="1" height="1" fill="#ffffff"/><rect x="5" y="162" width="1" height="1" fill="#6a7a8a"/><rect x="4" y="161" width="1" height="1" fill="#ffffff"/><rect x="3" y="164" width="1" height="1" fill="#6a7a8a"/><rect x="2" y="163" width="1" height="1" fill="#ffffff"/><rect x="5" y="166" width="1" height="1" fill="#6a7a8a"/><rect x="4" y="165" width="1" height="1" fill="#ffffff"/><rect x="3" y="168" width="1" height="1" fill="#6a7a8a"/><rect x="2" y="167" width="1" height="1" fill="#ffffff"/><rect x="5" y="170" width="1" height="1" fill="#6a7a8a"/><rect x="4" y="169" width="1" height="1" fill="#ffffff"/><rect x="3" y="172" width="1" height="1" fill="#6a7a8a"/><rect x="2" y="171" width="1" height="1" fill="#ffffff"/><rect x="5" y="174" width="1" height="1" fill="#6a7a8a"/><rect x="4" y="173" width="1" height="1" fill="#ffffff"/><rect x="3" y="176" width="1" height="1" fill="#6a7a8a"/><rect x="2" y="175" width="1" height="1" fill="#ffffff"/><rect x="5" y="178" width="1" height="1" fill="#6a7a8a"/><rect x="4" y="177" width="1" height="1" fill="#ffffff"/><rect x="3" y="180" width="1" height="1" fill="#6a7a8a"/><rect x="2" y="179" width="1" height="1" fill="#ffffff"/><rect x="5" y="182" width="1" height="1" fill="#6a7a8a"/><rect x="4" y="181" width="1" height="1" fill="#ffffff"/><rect x="3" y="184" width="1" height="1" fill="#6a7a8a"/><rect x="2" y="183" width="1" height="1" fill="#ffffff"/><rect x="5" y="186" width="1" height="1" fill="#6a7a8a"/><rect x="4" y="185" width="1" height="1" fill="#ffffff"/><rect x="3" y="188" width="1" height="1" fill="#6a7a8a"/><rect x="2" y="187" width="1" height="1" fill="#ffffff"/><rect x="5" y="190" width="1" height="1" fill="#6a7a8a"/><rect x="4" y="189" width="1" height="1" fill="#ffffff"/><rect x="3" y="192" width="1" height="1" fill="#6a7a8a"/><rect x="2" y="191" width="1" height="1" fill="#ffffff"/><rect x="5" y="194" width="1" height="1" fill="#6a7a8a"/><rect x="4" y="193" width="1" height="1" fill="#ffffff"/><rect x="3" y="196" width="1" height="1" fill="#6a7a8a"/><rect x="2" y="195" width="1" height="1" fill="#ffffff"/><rect x="5" y="198" width="1" height="1" fill="#6a7a8a"/><rect x="4" y="197" width="1" height="1" fill="#ffffff"/><rect x="3" y="200" width="1" height="1" fill="#6a7a8a"/><rect x="2" y="199" width="1" height="1" fill="#ffffff"/><rect x="5" y="202" width="1" height="1" fill="#6a7a8a"/><rect x="4" y="201" width="1" height="1" fill="#ffffff"/><rect x="3" y="204" width="1" height="1" fill="#6a7a8a"/><rect x="2" y="203" width="1" height="1" fill="#ffffff"/><rect x="5" y="206" width="1" height="1" fill="#6a7a8a"/><rect x="4" y="205" width="1" height="1" fill="#ffffff"/><rect x="3" y="208" width="1" height="1" fill="#6a7a8a"/><rect x="2" y="207" width="1" height="1" fill="#ffffff"/><rect x="5" y="210" width="1" height="1" fill="#6a7a8a"/><rect x="4" y="209" width="1" height="1" fill="#ffffff"/><rect x="3" y="212" width="1" height="1" fill="#6a7a8a"/><rect x="2" y="211" width="1" height="1" fill="#ffffff"/><rect x="5" y="214" width="1" height="1" fill="#6a7a8a"/><rect x="4" y="213" width="1" height="1" fill="#ffffff"/><rect x="3" y="216" width="1" height="1" fill="#6a7a8a"/><rect x="2" y="215" width="1" height="1" fill="#ffffff"/><rect x="5" y="218" width="1" height="1" fill="#6a7a8a"/><rect x="4" y="217" width="1" height="1" fill="#ffffff"/><rect x="3" y="220" width="1" height="1" fill="#6a7a8a"/><rect x="2" y="219" width="1" height="1" fill="#ffffff"/><rect x="5" y="222" width="1" height="1" fill="#6a7a8a"/><rect x="4" y="221" width="1" height="1" fill="#ffffff"/><rect x="3" y="224" width="1" height="1" fill="#6a7a8a"/><rect x="2" y="223" width="1" height="1" fill="#ffffff"/><rect x="5" y="226" width="1" height="1" fill="#6a7a8a"/><rect x="4" y="225" width="1" height="1" fill="#ffffff"/><rect x="3" y="228" width="1" height="1" fill="#6a7a8a"/><rect x="2" y="227" width="1" height="1" fill="#ffffff"/><rect x="5" y="230" width="1" height="1" fill="#6a7a8a"/><rect x="4" y="229" width="1" height="1" fill="#ffffff"/><rect x="3" y="232" width="1" height="1" fill="#6a7a8a"/><rect x="2" y="231" width="1" height="1" fill="#ffffff"/><rect x="5" y="234" width="1" height="1" fill="#6a7a8a"/><rect x="4" y="233" width="1" height="1" fill="#ffffff"/><rect x="3" y="236" width="1" height="1" fill="#6a7a8a"/><rect x="2" y="235" width="1" height="1" fill="#ffffff"/><rect x="5" y="238" width="1" height="1" fill="#6a7a8a"/><rect x="4" y="237" width="1" height="1" fill="#ffffff"/><rect x="3" y="240" width="1" height="1" fill="#6a7a8a"/><rect x="2" y="239" width="1" height="1" fill="#ffffff"/><rect x="5" y="242" width="1" height="1" fill="#6a7a8a"/><rect x="4" y="241" width="1" height="1" fill="#ffffff"/><rect x="3" y="244" width="1" height="1" fill="#6a7a8a"/><rect x="2" y="243" width="1" height="1" fill="#ffffff"/><rect x="5" y="246" width="1" height="1" fill="#6a7a8a"/><rect x="4" y="245" width="1" height="1" fill="#ffffff"/><rect x="3" y="248" width="1" height="1" fill="#6a7a8a"/><rect x="2" y="247" width="1" height="1" fill="#ffffff"/><rect x="5" y="250" width="1" height="1" fill="#6a7a8a"/><rect x="4" y="249" width="1" height="1" fill="#ffffff"/><rect x="3" y="252" width="1" height="1" fill="#6a7a8a"/><rect x="2" y="251" width="1" height="1" fill="#ffffff"/><rect x="5" y="254" width="1" height="1" fill="#6a7a8a"/><rect x="4" y="253" width="1" height="1" fill="#ffffff"/><rect x="3" y="256" width="1" height="1" fill="#6a7a8a"/><rect x="2" y="255" width="1" height="1" fill="#ffffff"/><rect x="5" y="258" width="1" height="1" fill="#6a7a8a"/><rect x="4" y="257" width="1" height="1" fill="#ffffff"/><rect x="3" y="260" width="1" height="1" fill="#6a7a8a"/><rect x="2" y="259" width="1" height="1" fill="#ffffff"/><rect x="5" y="262" width="1" height="1" fill="#6a7a8a"/><rect x="4" y="261" width="1" height="1" fill="#ffffff"/><rect x="3" y="264" width="1" height="1" fill="#6a7a8a"/><rect x="2" y="263" width="1" height="1" fill="#ffffff"/><rect x="5" y="266" width="1" height="1" fill="#6a7a8a"/><rect x="4" y="265" width="1" height="1" fill="#ffffff"/><rect x="3" y="268" width="1" height="1" fill="#6a7a8a"/><rect x="2" y="267" width="1" height="1" fill="#ffffff"/><rect x="5" y="270" width="1" height="1" fill="#6a7a8a"/><rect x="4" y="269" width="1" height="1" fill="#ffffff"/><rect x="3" y="272" width="1" height="1" fill="#6a7a8a"/><rect x="2" y="271" width="1" height="1" fill="#ffffff"/><rect x="5" y="274" width="1" height="1" fill="#6a7a8a"/><rect x="4" y="273" width="1" height="1" fill="#ffffff"/><rect x="3" y="276" width="1" height="1" fill="#6a7a8a"/><rect x="2" y="275" width="1" height="1" fill="#ffffff"/><rect x="5" y="278" width="1" height="1" fill="#6a7a8a"/><rect x="4" y="277" width="1" height="1" fill="#ffffff"/><rect x="3" y="280" width="1" height="1" fill="#6a7a8a"/><rect x="2" y="279" width="1" height="1" fill="#ffffff"/><rect x="5" y="282" width="1" height="1" fill="#6a7a8a"/><rect x="4" y="281" width="1" height="1" fill="#ffffff"/><rect x="3" y="284" width="1" height="1" fill="#6a7a8a"/><rect x="2" y="283" width="1" height="1" fill="#ffffff"/><rect x="5" y="286" width="1" height="1" fill="#6a7a8a"/><rect x="4" y="285" width="1" height="1" fill="#ffffff"/><rect x="3" y="288" width="1" height="1" fill="#6a7a8a"/><rect x="2" y="287" width="1" height="1" fill="#ffffff"/><rect x="5" y="290" width="1" height="1" fill="#6a7a8a"/><rect x="4" y="289" width="1" height="1" fill="#ffffff"/><rect x="3" y="292" width="1" height="1" fill="#6a7a8a"/><rect x="2" y="291" width="1" height="1" fill="#ffffff"/><rect x="5" y="294" width="1" height="1" fill="#6a7a8a"/><rect x="4" y="293" width="1" height="1" fill="#ffffff"/><rect x="3" y="296" width="1" height="1" fill="#6a7a8a"/><rect x="2" y="295" width="1" height="1" fill="#ffffff"/><rect x="5" y="298" width="1" height="1" fill="#6a7a8a"/><rect x="4" y="297" width="1" height="1" fill="#ffffff"/><rect x="3" y="300" width="1" height="1" fill="#6a7a8a"/><rect x="2" y="299" width="1" height="1" fill="#ffffff"/><rect x="5" y="302" width="1" height="1" fill="#6a7a8a"/><rect x="4" y="301" width="1" height="1" fill="#ffffff"/><rect x="3" y="304" width="1" height="1" fill="#6a7a8a"/><rect x="2" y="303" width="1" height="1" fill="#ffffff"/><rect x="5" y="306" width="1" height="1" fill="#6a7a8a"/><rect x="4" y="305" width="1" height="1" fill="#ffffff"/><rect x="3" y="308" width="1" height="1" fill="#6a7a8a"/><rect x="2" y="307" width="1" height="1" fill="#ffffff"/><rect x="5" y="310" width="1" height="1" fill="#6a7a8a"/><rect x="4" y="309" width="1" height="1" fill="#ffffff"/><rect x="3" y="312" width="1" height="1" fill="#6a7a8a"/><rect x="2" y="311" width="1" height="1" fill="#ffffff"/><rect x="5" y="314" width="1" height="1" fill="#6a7a8a"/><rect x="4" y="313" width="1" height="1" fill="#ffffff"/><rect x="3" y="316" width="1" height="1" fill="#6a7a8a"/><rect x="2" y="315" width="1" height="1" fill="#ffffff"/><rect x="5" y="318" width="1" height="1" fill="#6a7a8a"/><rect x="4" y="317" width="1" height="1" fill="#ffffff"/><rect x="3" y="320" width="1" height="1" fill="#6a7a8a"/><rect x="2" y="319" width="1" height="1" fill="#ffffff"/><rect x="5" y="322" width="1" height="1" fill="#6a7a8a"/><rect x="4" y="321" width="1" height="1" fill="#ffffff"/><rect x="3" y="324" width="1" height="1" fill="#6a7a8a"/><rect x="2" y="323" width="1" height="1" fill="#ffffff"/><rect x="5" y="326" width="1" height="1" fill="#6a7a8a"/><rect x="4" y="325" width="1" height="1" fill="#ffffff"/><rect x="3" y="328" width="1" height="1" fill="#6a7a8a"/><rect x="2" y="327" width="1" height="1" fill="#ffffff"/><rect x="5" y="330" width="1" height="1" fill="#6a7a8a"/><rect x="4" y="329" width="1" height="1" fill="#ffffff"/><rect x="3" y="332" width="1" height="1" fill="#6a7a8a"/><rect x="2" y="331" width="1" height="1" fill="#ffffff"/><rect x="5" y="334" width="1" height="1" fill="#6a7a8a"/><rect x="4" y="333" width="1" height="1" fill="#ffffff"/><rect x="3" y="336" width="1" height="1" fill="#6a7a8a"/><rect x="2" y="335" width="1" height="1" fill="#ffffff"/><rect x="5" y="338" width="1" height="1" fill="#6a7a8a"/><rect x="4" y="337" width="1" height="1" fill="#ffffff"/><rect x="3" y="340" width="1" height="1" fill="#6a7a8a"/><rect x="2" y="339" width="1" height="1" fill="#ffffff"/><rect x="5" y="342" width="1" height="1" fill="#6a7a8a"/><rect x="4" y="341" width="1" height="1" fill="#ffffff"/><rect x="3" y="344" width="1" height="1" fill="#6a7a8a"/><rect x="2" y="343" width="1" height="1" fill="#ffffff"/><rect x="5" y="346" width="1" height="1" fill="#6a7a8a"/><rect x="4" y="345" width="1" height="1" fill="#ffffff"/><rect x="3" y="348" width="1" height="1" fill="#6a7a8a"/><rect x="2" y="347" width="1" height="1" fill="#ffffff"/><rect x="5" y="350" width="1" height="1" fill="#6a7a8a"/><rect x="4" y="349" width="1" height="1" fill="#ffffff"/><rect x="3" y="352" width="1" height="1" fill="#6a7a8a"/><rect x="2" y="351" width="1" height="1" fill="#ffffff"/><rect x="5" y="354" width="1" height="1" fill="#6a7a8a"/><rect x="4" y="353" width="1" height="1" fill="#ffffff"/><rect x="3" y="356" width="1" height="1" fill="#6a7a8a"/><rect x="2" y="355" width="1" height="1" fill="#ffffff"/><rect x="5" y="358" width="1" height="1" fill="#6a7a8a"/><rect x="4" y="357" width="1" height="1" fill="#ffffff"/><rect x="3" y="360" width="1" height="1" fill="#6a7a8a"/><rect x="2" y="359" width="1" height="1" fill="#ffffff"/><rect x="5" y="362" width="1" height="1" fill="#6a7a8a"/><rect x="4" y="361" width="1" height="1" fill="#ffffff"/><rect x="3" y="364" width="1" height="1" fill="#6a7a8a"/><rect x="2" y="363" width="1" height="1" fill="#ffffff"/><rect x="5" y="366" width="1" height="1" fill="#6a7a8a"/><rect x="4" y="365" width="1" height="1" fill="#ffffff"/><rect x="3" y="368" width="1" height="1" fill="#6a7a8a"/><rect x="2" y="367" width="1" height="1" fill="#ffffff"/><rect x="5" y="370" width="1" height="1" fill="#6a7a8a"/><rect x="4" y="369" width="1" height="1" fill="#ffffff"/><rect x="3" y="372" width="1" height="1" fill="#6a7a8a"/><rect x="2" y="371" width="1" height="1" fill="#ffffff"/><rect x="5" y="374" width="1" height="1" fill="#6a7a8a"/><rect x="4" y="373" width="1" height="1" fill="#ffffff"/><rect x="3" y="376" width="1" height="1" fill="#6a7a8a"/><rect x="2" y="375" width="1" height="1" fill="#ffffff"/><rect x="5" y="378" width="1" height="1" fill="#6a7a8a"/><rect x="4" y="377" width="1" height="1" fill="#ffffff"/><rect x="3" y="380" width="1" height="1" fill="#6a7a8a"/><rect x="2" y="379" width="1" height="1" fill="#ffffff"/><rect x="5" y="382" width="1" height="1" fill="#6a7a8a"/><rect x="4" y="381" width="1" height="1" fill="#ffffff"/><rect x="3" y="384" width="1" height="1" fill="#6a7a8a"/><rect x="2" y="383" width="1" height="1" fill="#ffffff"/><rect x="5" y="386" width="1" height="1" fill="#6a7a8a"/><rect x="4" y="385" width="1" height="1" fill="#ffffff"/><rect x="3" y="388" width="1" height="1" fill="#6a7a8a"/><rect x="2" y="387" width="1" height="1" fill="#ffffff"/><rect x="5" y="390" width="1" height="1" fill="#6a7a8a"/><rect x="4" y="389" width="1" height="1" fill="#ffffff"/><rect x="3" y="392" width="1" height="1" fill="#6a7a8a"/><rect x="2" y="391" width="1" height="1" fill="#ffffff"/><rect x="5" y="394" width="1" height="1" fill="#6a7a8a"/><rect x="4" y="393" width="1" height="1" fill="#ffffff"/><rect x="3" y="396" width="1" height="1" fill="#6a7a8a"/><rect x="2" y="395" width="1" height="1" fill="#ffffff"/><rect x="5" y="398" width="1" height="1" fill="#6a7a8a"/><rect x="4" y="397" width="1" height="1" fill="#ffffff"/><rect x="3" y="400" width="1" height="1" fill="#6a7a8a"/><rect x="2" y="399" width="1" height="1" fill="#ffffff"/><rect x="5" y="402" width="1" height="1" fill="#6a7a8a"/><rect x="4" y="401" width="1" height="1" fill="#ffffff"/><rect x="3" y="404" width="1" height="1" fill="#6a7a8a"/><rect x="2" y="403" width="1" height="1" fill="#ffffff"/><rect x="5" y="406" width="1" height="1" fill="#6a7a8a"/><rect x="4" y="405" width="1" height="1" fill="#ffffff"/><rect x="3" y="408" width="1" height="1" fill="#6a7a8a"/><rect x="2" y="407" width="1" height="1" fill="#ffffff"/><rect x="5" y="410" width="1" height="1" fill="#6a7a8a"/><rect x="4" y="409" width="1" height="1" fill="#ffffff"/><rect x="3" y="412" width="1" height="1" fill="#6a7a8a"/><rect x="2" y="411" width="1" height="1" fill="#ffffff"/><rect x="5" y="414" width="1" height="1" fill="#6a7a8a"/><rect x="4" y="413" width="1" height="1" fill="#ffffff"/><rect x="3" y="416" width="1" height="1" fill="#6a7a8a"/><rect x="2" y="415" width="1" height="1" fill="#ffffff"/><rect x="5" y="418" width="1" height="1" fill="#6a7a8a"/><rect x="4" y="417" width="1" height="1" fill="#ffffff"/><rect x="3" y="420" width="1" height="1" fill="#6a7a8a"/><rect x="2" y="419" width="1" height="1" fill="#ffffff"/><rect x="5" y="422" width="1" height="1" fill="#6a7a8a"/><rect x="4" y="421" width="1" height="1" fill="#ffffff"/><rect x="3" y="424" width="1" height="1" fill="#6a7a8a"/><rect x="2" y="423" width="1" height="1" fill="#ffffff"/><rect x="5" y="426" width="1" height="1" fill="#6a7a8a"/><rect x="4" y="425" width="1" height="1" fill="#ffffff"/><rect x="3" y="428" width="1" height="1" fill="#6a7a8a"/><rect x="2" y="427" width="1" height="1" fill="#ffffff"/><rect x="5" y="430" width="1" height="1" fill="#6a7a8a"/><rect x="4" y="429" width="1" height="1" fill="#ffffff"/><rect x="3" y="432" width="1" height="1" fill="#6a7a8a"/><rect x="2" y="431" width="1" height="1" fill="#ffffff"/><rect x="5" y="434" width="1" height="1" fill="#6a7a8a"/><rect x="4" y="433" width="1" height="1" fill="#ffffff"/><rect x="3" y="436" width="1" height="1" fill="#6a7a8a"/><rect x="2" y="435" width="1" height="1" fill="#ffffff"/><rect x="5" y="438" width="1" height="1" fill="#6a7a8a"/><rect x="4" y="437" width="1" height="1" fill="#ffffff"/><rect x="3" y="440" width="1" height="1" fill="#6a7a8a"/><rect x="2" y="439" width="1" height="1" fill="#ffffff"/><rect x="5" y="442" width="1" height="1" fill="#6a7a8a"/><rect x="4" y="441" width="1" height="1" fill="#ffffff"/><rect x="3" y="444" width="1" height="1" fill="#6a7a8a"/><rect x="2" y="443" width="1" height="1" fill="#ffffff"/><rect x="5" y="446" width="1" height="1" fill="#6a7a8a"/><rect x="4" y="445" width="1" height="1" fill="#ffffff"/><rect x="3" y="448" width="1" height="1" fill="#6a7a8a"/><rect x="2" y="447" width="1" height="1" fill="#ffffff"/><rect x="5" y="450" width="1" height="1" fill="#6a7a8a"/><rect x="4" y="449" width="1" height="1" fill="#ffffff"/><rect x="3" y="452" width="1" height="1" fill="#6a7a8a"/><rect x="2" y="451" width="1" height="1" fill="#ffffff"/><rect x="5" y="454" width="1" height="1" fill="#6a7a8a"/><rect x="4" y="453" width="1" height="1" fill="#ffffff"/><rect x="3" y="456" width="1" height="1" fill="#6a7a8a"/><rect x="2" y="455" width="1" height="1" fill="#ffffff"/><rect x="5" y="458" width="1" height="1" fill="#6a7a8a"/><rect x="4" y="457" width="1" height="1" fill="#ffffff"/><rect x="3" y="460" width="1" height="1" fill="#6a7a8a"/><rect x="2" y="459" width="1" height="1" fill="#ffffff"/><rect x="5" y="462" width="1" height="1" fill="#6a7a8a"/><rect x="4" y="461" width="1" height="1" fill="#ffffff"/><rect x="3" y="464" width="1" height="1" fill="#6a7a8a"/><rect x="2" y="463" width="1" height="1" fill="#ffffff"/><rect x="5" y="466" width="1" height="1" fill="#6a7a8a"/><rect x="4" y="465" width="1" height="1" fill="#ffffff"/><rect x="3" y="468" width="1" height="1" fill="#6a7a8a"/><rect x="2" y="467" width="1" height="1" fill="#ffffff"/><rect x="5" y="470" width="1" height="1" fill="#6a7a8a"/><rect x="4" y="469" width="1" height="1" fill="#ffffff"/><rect x="3" y="472" width="1" height="1" fill="#6a7a8a"/><rect x="2" y="471" width="1" height="1" fill="#ffffff"/><rect x="5" y="474" width="1" height="1" fill="#6a7a8a"/><rect x="4" y="473" width="1" height="1" fill="#ffffff"/><rect x="3" y="476" width="1" height="1" fill="#6a7a8a"/><rect x="2" y="475" width="1" height="1" fill="#ffffff"/><rect x="5" y="478" width="1" height="1" fill="#6a7a8a"/><rect x="4" y="477" width="1" height="1" fill="#ffffff"/><rect x="3" y="480" width="1" height="1" fill="#6a7a8a"/><rect x="2" y="479" width="1" height="1" fill="#ffffff"/><rect x="5" y="482" width="1" height="1" fill="#6a7a8a"/><rect x="4" y="481" width="1" height="1" fill="#ffffff"/><rect x="3" y="484" width="1" height="1" fill="#6a7a8a"/><rect x="2" y="483" width="1" height="1" fill="#ffffff"/><rect x="5" y="486" width="1" height="1" fill="#6a7a8a"/><rect x="4" y="485" width="1" height="1" fill="#ffffff"/><rect x="3" y="488" width="1" height="1" fill="#6a7a8a"/><rect x="2" y="487" width="1" height="1" fill="#ffffff"/><rect x="5" y="490" width="1" height="1" fill="#6a7a8a"/><rect x="4" y="489" width="1" height="1" fill="#ffffff"/><rect x="3" y="492" width="1" height="1" fill="#6a7a8a"/><rect x="2" y="491" width="1" height="1" fill="#ffffff"/><rect x="5" y="494" width="1" height="1" fill="#6a7a8a"/><rect x="4" y="493" width="1" height="1" fill="#ffffff"/><rect x="3" y="496" width="1" height="1" fill="#6a7a8a"/><rect x="2" y="495" width="1" height="1" fill="#ffffff"/><rect x="5" y="498" width="1" height="1" fill="#6a7a8a"/><rect x="4" y="497" width="1" height="1" fill="#ffffff"/><rect x="3" y="500" width="1" height="1" fill="#6a7a8a"/><rect x="2" y="499" width="1" height="1" fill="#ffffff"/><rect x="5" y="502" width="1" height="1" fill="#6a7a8a"/><rect x="4" y="501" width="1" height="1" fill="#ffffff"/><rect x="3" y="504" width="1" height="1" fill="#6a7a8a"/><rect x="2" y="503" width="1" height="1" fill="#ffffff"/><rect x="5" y="506" width="1" height="1" fill="#6a7a8a"/><rect x="4" y="505" width="1" height="1" fill="#ffffff"/><rect x="3" y="508" width="1" height="1" fill="#6a7a8a"/><rect x="2" y="507" width="1" height="1" fill="#ffffff"/><rect x="5" y="510" width="1" height="1" fill="#6a7a8a"/><rect x="4" y="509" width="1" height="1" fill="#ffffff"/><rect x="3" y="512" width="1" height="1" fill="#6a7a8a"/><rect x="2" y="511" width="1" height="1" fill="#ffffff"/><rect x="5" y="514" width="1" height="1" fill="#6a7a8a"/><rect x="4" y="513" width="1" height="1" fill="#ffffff"/><rect x="3" y="516" width="1" height="1" fill="#6a7a8a"/><rect x="2" y="515" width="1" height="1" fill="#ffffff"/><rect x="5" y="518" width="1" height="1" fill="#6a7a8a"/><rect x="4" y="517" width="1" height="1" fill="#ffffff"/><rect x="3" y="520" width="1" height="1" fill="#6a7a8a"/><rect x="2" y="519" width="1" height="1" fill="#ffffff"/><rect x="5" y="522" width="1" height="1" fill="#6a7a8a"/><rect x="4" y="521" width="1" height="1" fill="#ffffff"/><rect x="3" y="524" width="1" height="1" fill="#6a7a8a"/><rect x="2" y="523" width="1" height="1" fill="#ffffff"/><rect x="5" y="526" width="1" height="1" fill="#6a7a8a"/><rect x="4" y="525" width="1" height="1" fill="#ffffff"/><rect x="3" y="528" width="1" height="1" fill="#6a7a8a"/><rect x="2" y="527" width="1" height="1" fill="#ffffff"/><rect x="5" y="530" width="1" height="1" fill="#6a7a8a"/><rect x="4" y="529" width="1" height="1" fill="#ffffff"/><rect x="3" y="532" width="1" height="1" fill="#6a7a8a"/><rect x="2" y="531" width="1" height="1" fill="#ffffff"/><rect x="5" y="534" width="1" height="1" fill="#6a7a8a"/><rect x="4" y="533" width="1" height="1" fill="#ffffff"/><rect x="3" y="536" width="1" height="1" fill="#6a7a8a"/><rect x="2" y="535" width="1" height="1" fill="#ffffff"/><rect x="5" y="538" width="1" height="1" fill="#6a7a8a"/><rect x="4" y="537" width="1" height="1" fill="#ffffff"/><rect x="3" y="540" width="1" height="1" fill="#6a7a8a"/><rect x="2" y="539" width="1" height="1" fill="#ffffff"/><rect x="5" y="542" width="1" height="1" fill="#6a7a8a"/><rect x="4" y="541" width="1" height="1" fill="#ffffff"/><rect x="3" y="544" width="1" height="1" fill="#6a7a8a"/><rect x="2" y="543" width="1" height="1" fill="#ffffff"/><rect x="5" y="546" width="1" height="1" fill="#6a7a8a"/><rect x="4" y="545" width="1" height="1" fill="#ffffff"/><rect x="3" y="548" width="1" height="1" fill="#6a7a8a"/><rect x="2" y="547" width="1" height="1" fill="#ffffff"/><rect x="5" y="550" width="1" height="1" fill="#6a7a8a"/><rect x="4" y="549" width="1" height="1" fill="#ffffff"/><rect x="3" y="552" width="1" height="1" fill="#6a7a8a"/><rect x="2" y="551" width="1" height="1" fill="#ffffff"/><rect x="5" y="554" width="1" height="1" fill="#6a7a8a"/><rect x="4" y="553" width="1" height="1" fill="#ffffff"/><rect x="3" y="556" width="1" height="1" fill="#6a7a8a"/><rect x="2" y="555" width="1" height="1" fill="#ffffff"/><rect x="5" y="558" width="1" height="1" fill="#6a7a8a"/><rect x="4" y="557" width="1" height="1" fill="#ffffff"/><rect x="3" y="560" width="1" height="1" fill="#6a7a8a"/><rect x="2" y="559" width="1" height="1" fill="#ffffff"/><rect x="5" y="562" width="1" height="1" fill="#6a7a8a"/><rect x="4" y="561" width="1" height="1" fill="#ffffff"/><rect x="3" y="564" width="1" height="1" fill="#6a7a8a"/><rect x="2" y="563" width="1" height="1" fill="#ffffff"/><rect x="5" y="566" width="1" height="1" fill="#6a7a8a"/><rect x="4" y="565" width="1" height="1" fill="#ffffff"/><rect x="3" y="568" width="1" height="1" fill="#6a7a8a"/><rect x="2" y="567" width="1" height="1" fill="#ffffff"/><rect x="5" y="570" width="1" height="1" fill="#6a7a8a"/><rect x="4" y="569" width="1" height="1" fill="#ffffff"/><rect x="3" y="572" width="1" height="1" fill="#6a7a8a"/><rect x="2" y="571" width="1" height="1" fill="#ffffff"/><rect x="5" y="574" width="1" height="1" fill="#6a7a8a"/><rect x="4" y="573" width="1" height="1" fill="#ffffff"/><rect x="3" y="576" width="1" height="1" fill="#6a7a8a"/><rect x="2" y="575" width="1" height="1" fill="#ffffff"/><rect x="5" y="578" width="1" height="1" fill="#6a7a8a"/><rect x="4" y="577" width="1" height="1" fill="#ffffff"/><rect x="3" y="580" width="1" height="1" fill="#6a7a8a"/><rect x="2" y="579" width="1" height="1" fill="#ffffff"/><rect x="5" y="582" width="1" height="1" fill="#6a7a8a"/><rect x="4" y="581" width="1" height="1" fill="#ffffff"/><rect x="3" y="584" width="1" height="1" fill="#6a7a8a"/><rect x="2" y="583" width="1" height="1" fill="#ffffff"/><rect x="5" y="586" width="1" height="1" fill="#6a7a8a"/><rect x="4" y="585" width="1" height="1" fill="#ffffff"/><rect x="3" y="588" width="1" height="1" fill="#6a7a8a"/><rect x="2" y="587" width="1" height="1" fill="#ffffff"/><rect x="5" y="590" width="1" height="1" fill="#6a7a8a"/><rect x="4" y="589" width="1" height="1" fill="#ffffff"/><rect x="3" y="592" width="1" height="1" fill="#6a7a8a"/><rect x="2" y="591" width="1" height="1" fill="#ffffff"/><rect x="5" y="594" width="1" height="1" fill="#6a7a8a"/><rect x="4" y="593" width="1" height="1" fill="#ffffff"/><rect x="3" y="596" width="1" height="1" fill="#6a7a8a"/><rect x="2" y="595" width="1" height="1" fill="#ffffff"/><rect x="5" y="598" width="1" height="1" fill="#6a7a8a"/><rect x="4" y="597" width="1" height="1" fill="#ffffff"/><rect x="3" y="600" width="1" height="1" fill="#6a7a8a"/><rect x="2" y="599" width="1" height="1" fill="#ffffff"/><rect x="5" y="602" width="1" height="1" fill="#6a7a8a"/><rect x="4" y="601" width="1" height="1" fill="#ffffff"/><rect x="3" y="604" width="1" height="1" fill="#6a7a8a"/><rect x="2" y="603" width="1" height="1" fill="#ffffff"/><rect x="5" y="606" width="1" height="1" fill="#6a7a8a"/><rect x="4" y="605" width="1" height="1" fill="#ffffff"/><rect x="3" y="608" width="1" height="1" fill="#6a7a8a"/><rect x="2" y="607" width="1" height="1" fill="#ffffff"/><rect x="5" y="610" width="1" height="1" fill="#6a7a8a"/><rect x="4" y="609" width="1" height="1" fill="#ffffff"/><rect x="3" y="612" width="1" height="1" fill="#6a7a8a"/><rect x="2" y="611" width="1" height="1" fill="#ffffff"/><rect x="5" y="614" width="1" height="1" fill="#6a7a8a"/><rect x="4" y="613" width="1" height="1" fill="#ffffff"/><rect x="3" y="616" width="1" height="1" fill="#6a7a8a"/><rect x="2" y="615" width="1" height="1" fill="#ffffff"/><rect x="5" y="618" width="1" height="1" fill="#6a7a8a"/><rect x="4" y="617" width="1" height="1" fill="#ffffff"/><rect x="3" y="620" width="1" height="1" fill="#6a7a8a"/><rect x="2" y="619" width="1" height="1" fill="#ffffff"/><rect x="5" y="622" width="1" height="1" fill="#6a7a8a"/><rect x="4" y="621" width="1" height="1" fill="#ffffff"/><rect x="3" y="624" width="1" height="1" fill="#6a7a8a"/><rect x="2" y="623" width="1" height="1" fill="#ffffff"/><rect x="5" y="626" width="1" height="1" fill="#6a7a8a"/><rect x="4" y="625" width="1" height="1" fill="#ffffff"/><rect x="3" y="628" width="1" height="1" fill="#6a7a8a"/><rect x="2" y="627" width="1" height="1" fill="#ffffff"/><rect x="5" y="630" width="1" height="1" fill="#6a7a8a"/><rect x="4" y="629" width="1" height="1" fill="#ffffff"/><rect x="3" y="632" width="1" height="1" fill="#6a7a8a"/><rect x="2" y="631" width="1" height="1" fill="#ffffff"/><rect x="5" y="634" width="1" height="1" fill="#6a7a8a"/><rect x="4" y="633" width="1" height="1" fill="#ffffff"/><rect x="3" y="636" width="1" height="1" fill="#6a7a8a"/><rect x="2" y="635" width="1" height="1" fill="#ffffff"/><rect x="5" y="638" width="1" height="1" fill="#6a7a8a"/><rect x="4" y="637" width="1" height="1" fill="#ffffff"/><rect x="3" y="640" width="1" height="1" fill="#6a7a8a"/><rect x="2" y="639" width="1" height="1" fill="#ffffff"/><rect x="5" y="642" width="1" height="1" fill="#6a7a8a"/><rect x="4" y="641" width="1" height="1" fill="#ffffff"/><rect x="3" y="644" width="1" height="1" fill="#6a7a8a"/><rect x="2" y="643" width="1" height="1" fill="#ffffff"/><rect x="5" y="646" width="1" height="1" fill="#6a7a8a"/><rect x="4" y="645" width="1" height="1" fill="#ffffff"/><rect x="3" y="648" width="1" height="1" fill="#6a7a8a"/><rect x="2" y="647" width="1" height="1" fill="#ffffff"/><rect x="5" y="650" width="1" height="1" fill="#6a7a8a"/><rect x="4" y="649" width="1" height="1" fill="#ffffff"/><rect x="3" y="652" width="1" height="1" fill="#6a7a8a"/><rect x="2" y="651" width="1" height="1" fill="#ffffff"/><rect x="5" y="654" width="1" height="1" fill="#6a7a8a"/><rect x="4" y="653" width="1" height="1" fill="#ffffff"/><rect x="3" y="656" width="1" height="1" fill="#6a7a8a"/><rect x="2" y="655" width="1" height="1" fill="#ffffff"/><rect x="5" y="658" width="1" height="1" fill="#6a7a8a"/><rect x="4" y="657" width="1" height="1" fill="#ffffff"/><rect x="3" y="660" width="1" height="1" fill="#6a7a8a"/><rect x="2" y="659" width="1" height="1" fill="#ffffff"/><rect x="5" y="662" width="1" height="1" fill="#6a7a8a"/><rect x="4" y="661" width="1" height="1" fill="#ffffff"/><rect x="3" y="664" width="1" height="1" fill="#6a7a8a"/><rect x="2" y="663" width="1" height="1" fill="#ffffff"/><rect x="5" y="666" width="1" height="1" fill="#6a7a8a"/><rect x="4" y="665" width="1" height="1" fill="#ffffff"/><rect x="3" y="668" width="1" height="1" fill="#6a7a8a"/><rect x="2" y="667" width="1" height="1" fill="#ffffff"/><rect x="5" y="670" width="1" height="1" fill="#6a7a8a"/><rect x="4" y="669" width="1" height="1" fill="#ffffff"/><rect x="3" y="672" width="1" height="1" fill="#6a7a8a"/><rect x="2" y="671" width="1" height="1" fill="#ffffff"/><rect x="5" y="674" width="1" height="1" fill="#6a7a8a"/><rect x="4" y="673" width="1" height="1" fill="#ffffff"/><rect x="3" y="676" width="1" height="1" fill="#6a7a8a"/><rect x="2" y="675" width="1" height="1" fill="#ffffff"/><rect x="5" y="678" width="1" height="1" fill="#6a7a8a"/><rect x="4" y="677" width="1" height="1" fill="#ffffff"/><rect x="3" y="680" width="1" height="1" fill="#6a7a8a"/><rect x="2" y="679" width="1" height="1" fill="#ffffff"/><rect x="5" y="682" width="1" height="1" fill="#6a7a8a"/><rect x="4" y="681" width="1" height="1" fill="#ffffff"/><rect x="3" y="684" width="1" height="1" fill="#6a7a8a"/><rect x="2" y="683" width="1" height="1" fill="#ffffff"/><rect x="5" y="686" width="1" height="1" fill="#6a7a8a"/><rect x="4" y="685" width="1" height="1" fill="#ffffff"/><rect x="3" y="688" width="1" height="1" fill="#6a7a8a"/><rect x="2" y="687" width="1" height="1" fill="#ffffff"/><rect x="5" y="690" width="1" height="1" fill="#6a7a8a"/><rect x="4" y="689" width="1" height="1" fill="#ffffff"/><rect x="3" y="692" width="1" height="1" fill="#6a7a8a"/><rect x="2" y="691" width="1" height="1" fill="#ffffff"/><rect x="5" y="694" width="1" height="1" fill="#6a7a8a"/><rect x="4" y="693" width="1" height="1" fill="#ffffff"/><rect x="3" y="696" width="1" height="1" fill="#6a7a8a"/><rect x="2" y="695" width="1" height="1" fill="#ffffff"/><rect x="5" y="698" width="1" height="1" fill="#6a7a8a"/><rect x="4" y="697" width="1" height="1" fill="#ffffff"/><rect x="3" y="700" width="1" height="1" fill="#6a7a8a"/><rect x="2" y="699" width="1" height="1" fill="#ffffff"/><rect x="5" y="702" width="1" height="1" fill="#6a7a8a"/><rect x="4" y="701" width="1" height="1" fill="#ffffff"/><rect x="3" y="704" width="1" height="1" fill="#6a7a8a"/><rect x="2" y="703" width="1" height="1" fill="#ffffff"/><rect x="5" y="706" width="1" height="1" fill="#6a7a8a"/><rect x="4" y="705" width="1" height="1" fill="#ffffff"/><rect x="3" y="708" width="1" height="1" fill="#6a7a8a"/><rect x="2" y="707" width="1" height="1" fill="#ffffff"/><rect x="5" y="710" width="1" height="1" fill="#6a7a8a"/><rect x="4" y="709" width="1" height="1" fill="#ffffff"/><rect x="3" y="712" width="1" height="1" fill="#6a7a8a"/><rect x="2" y="711" width="1" height="1" fill="#ffffff"/><rect x="5" y="714" width="1" height="1" fill="#6a7a8a"/><rect x="4" y="713" width="1" height="1" fill="#ffffff"/><rect x="3" y="716" width="1" height="1" fill="#6a7a8a"/><rect x="2" y="715" width="1" height="1" fill="#ffffff"/><rect x="5" y="718" width="1" height="1" fill="#6a7a8a"/><rect x="4" y="717" width="1" height="1" fill="#ffffff"/><rect x="3" y="720" width="1" height="1" fill="#6a7a8a"/><rect x="2" y="719" width="1" height="1" fill="#ffffff"/><rect x="5" y="722" width="1" height="1" fill="#6a7a8a"/><rect x="4" y="721" width="1" height="1" fill="#ffffff"/><rect x="3" y="724" width="1" height="1" fill="#6a7a8a"/><rect x="2" y="723" width="1" height="1" fill="#ffffff"/><rect x="5" y="726" width="1" height="1" fill="#6a7a8a"/><rect x="4" y="725" width="1" height="1" fill="#ffffff"/><rect x="3" y="728" width="1" height="1" fill="#6a7a8a"/><rect x="2" y="727" width="1" height="1" fill="#ffffff"/><rect x="5" y="730" width="1" height="1" fill="#6a7a8a"/><rect x="4" y="729" width="1" height="1" fill="#ffffff"/><rect x="3" y="732" width="1" height="1" fill="#6a7a8a"/><rect x="2" y="731" width="1" height="1" fill="#ffffff"/><rect x="5" y="734" width="1" height="1" fill="#6a7a8a"/><rect x="4" y="733" width="1" height="1" fill="#ffffff"/><rect x="3" y="736" width="1" height="1" fill="#6a7a8a"/><rect x="2" y="735" width="1" height="1" fill="#ffffff"/><rect x="5" y="738" width="1" height="1" fill="#6a7a8a"/><rect x="4" y="737" width="1" height="1" fill="#ffffff"/><rect x="3" y="740" width="1" height="1" fill="#6a7a8a"/><rect x="2" y="739" width="1" height="1" fill="#ffffff"/><rect x="5" y="742" width="1" height="1" fill="#6a7a8a"/><rect x="4" y="741" width="1" height="1" fill="#ffffff"/><rect x="3" y="744" width="1" height="1" fill="#6a7a8a"/><rect x="2" y="743" width="1" height="1" fill="#ffffff"/><rect x="5" y="746" width="1" height="1" fill="#6a7a8a"/><rect x="4" y="745" width="1" height="1" fill="#ffffff"/><rect x="3" y="748" width="1" height="1" fill="#6a7a8a"/><rect x="2" y="747" width="1" height="1" fill="#ffffff"/><rect x="5" y="750" width="1" height="1" fill="#6a7a8a"/><rect x="4" y="749" width="1" height="1" fill="#ffffff"/><rect x="3" y="752" width="1" height="1" fill="#6a7a8a"/><rect x="2" y="751" width="1" height="1" fill="#ffffff"/></svg>
<svg class="a" style="left:3px;top:66px" width="60" height="60" viewBox="3 66 60 60">
<path d="M10.5 81 V113.5 H20 M14 75.5 H20 M30.5 84.5 V91 M34 94 H40" stroke="#a9c3e3" stroke-width="1" fill="none"/>
<circle cx="11" cy="75" r="2.3" fill="#fff" stroke="#4a72c0" stroke-width="1.7"/>
<rect x="10" y="77.5" width="2" height="4.2" fill="#4a72c0"/>
<circle cx="31.2" cy="94" r="2.3" fill="#fff" stroke="#4a72c0" stroke-width="1.7"/>
<rect x="33.5" y="93" width="4.3" height="2" fill="#4a72c0"/>
</svg>
<svg class="a" style="left:22px;top:64px" width="20" height="22" viewBox="0 0 20 22">
<defs><linearGradient id="gFl" x1="0" y1="0" x2="1" y2="0"><stop offset="0" stop-color="#7a58b8"/><stop offset="0.5" stop-color="#8e6ad0"/><stop offset="1" stop-color="#7050b0"/></linearGradient></defs>
<path d="M10.6 5 L11 2.5 L12 1.5" stroke="#c8c0d8" stroke-width="1.2" fill="none"/>
<path d="M8.2 7.6 L12.6 7.6 L16.9 17 Q17.2 20.3 14.8 20.3 L6.2 20.3 Q3.8 20.3 4.1 17 Z" fill="#ebe6f2" stroke="#6a6a7a" stroke-width="0.8"/>
<path d="M5.5 14 L15.4 14 L16.9 17 Q17.2 20.3 14.8 20.3 L6.2 20.3 Q3.8 20.3 4.1 17 Z" fill="url(#gFl)"/>
<rect x="9.2" y="8" width="1.2" height="8" fill="#fff"/>
<path d="M7.1 6.4 Q7.1 5.3 8.2 5.3 H12.8 Q13.9 5.3 13.9 6.4 Q13.9 7.5 12.8 7.5 H8.2 Q7.1 7.5 7.1 6.4 Z" fill="#fff" stroke="#3a3a3a" stroke-width="0.9"/>
<path d="M8 20.2 H14.7" stroke="#505050" stroke-width="0.9"/>
</svg>
<svg class="a" style="left:42px;top:84px" width="20" height="22" viewBox="0 0 20 22">
<defs><linearGradient id="gSp" x1="0" y1="0" x2="1" y2="0"><stop offset="0" stop-color="#7a7090"/><stop offset="0.45" stop-color="#9c92b2"/><stop offset="1" stop-color="#c4bcd4"/></linearGradient></defs>
<rect x="4" y="5.3" width="10.2" height="11.8" fill="url(#gSp)"/>
<path d="M4.4 5.5 V16.5" stroke="#5e5278" stroke-width="1"/>
<path d="M7 7.8 H9 M7 10.4 H10 M7 13.3 H10 M6.5 16.4 H11" stroke="#6e6488" stroke-width="0.9"/>
<path d="M2.1 3.6 L4 2.1 H14.5 L16.8 3.6 L14.5 5.3 H4 Z" fill="#948aac"/>
<path d="M2.6 4.2 L4 5.3 H14.5 L16 4.2" stroke="#4a4a4a" stroke-width="1" fill="none"/>
<path d="M2.1 17.6 L4 15.9 H14.5 L16.8 17.6 L14.5 19.8 H4 Z" fill="#8e84a8" stroke="#766c90" stroke-width="0.5"/>
<path d="M12.2 15.4 Q13 12.5 14.2 9.8 Q15.6 7 17.8 7 Q19.6 7.2 20.2 9.8" stroke="#625c78" stroke-width="1.2" fill="none" stroke-dasharray="1.8 0.4"/>
</svg>
<svg class="a" style="left:22px;top:103px" width="20" height="22" viewBox="0 0 20 22">
<path d="M5 2.2 H16 L17.6 3.8 V18 L16 19.6 H5 L3.4 18 V3.8 Z" fill="#fff" stroke="#786c90" stroke-width="1.1"/>
<path d="M5.2 3.8 H15.8" stroke="#fff"/>
<path d="M6.2 5.2 Q6.5 6.8 8 6.8 H13 Q14.5 6.8 14.8 5.2" stroke="#3a3a3a" stroke-width="1.4" fill="none"/>
<circle cx="9.4" cy="4.3" r="0.6" fill="#333"/><circle cx="11.5" cy="4.3" r="0.6" fill="#333"/>
<rect x="5.5" y="7.3" width="10" height="1.2" fill="#e0dce8"/>
<path d="M10 9.3 H14.8 M10 11.4 H14.8 M10 13.4 H14.8 M10 15.4 H14.8 M10 17.4 H14.8" stroke="#3c3c3c" stroke-width="1"/>
<path d="M7.2 9.3 H8 M7.2 11.4 H8 M7.2 13.4 H8 M7.2 15.4 H8 M7.2 17.4 H8" stroke="#333" stroke-width="1"/>
<path d="M4.8 12.4 L5.8 13.4 L7.2 12.8 M4.8 16.4 L5.8 17.4 L7.2 16.8" stroke="#30b020" stroke-width="1" fill="none"/>
</svg>
<svg class="a" style="left:1438px;top:38px" width="15" height="14" viewBox="0 0 15 14">
<defs><linearGradient id="gWn" x1="0" y1="0" x2="0" y2="1"><stop offset="0" stop-color="#fff8b0"/><stop offset="0.5" stop-color="#ffe800"/><stop offset="1" stop-color="#ffd000"/></linearGradient></defs>
<path d="M7.5 0.9 L14.1 12.4 Q14.3 13.1 13.5 13.1 H1.5 Q0.7 13.1 0.9 12.4 Z" fill="url(#gWn)" stroke="#f08010" stroke-width="1.2" stroke-linejoin="round"/>
<rect x="6.4" y="4" width="2.2" height="4.8" fill="#b84010"/>
<rect x="6.4" y="9.6" width="2.2" height="1.8" fill="#b84010"/>
</svg>
<div class="t r11" style="left:46px;top:71px">Test Plan</div>
<div class="a" style="left:65px;top:85px;width:71px;height:19px;background:#b9cfe6;border:1px solid #5b82c4"></div>
<div class="t r11" style="left:67px;top:90px">Thread Group</div>
<div class="t r11" style="left:46px;top:109px">WorkBench</div>

<!-- right content -->
<div class="t b" style="left:408px;top:80px;font-size:16px;line-height:16px">Thread Group</div>
<div class="etch" style="left:407px;top:102px;width:1098px;height:44px"></div>
<div class="t b" style="left:409px;top:109px">Name:</div>
<div class="fld" style="left:450px;top:104px;width:1053px;height:19px"></div>
<div class="t" style="left:452px;top:109px">Thread Group</div>
<div class="t b" style="left:409px;top:132px">Comments:</div>
<div class="a" style="left:474px;top:129px;width:1030px;height:16px;background:#fff"></div>

<div class="a" style="left:409px;top:155px;width:1095px;height:47px;border:1px solid #b8cfe5"></div>
<div class="a" style="left:413px;top:150px;width:229px;height:10px;background:#ededed"></div>
<div class="t b" style="left:415px;top:150px">Action to be taken after a Sampler error</div>
<div class="rad" style="left:695px;top:176px"></div>
<div class="a" style="left:698px;top:179px;width:6px;height:6px;border-radius:50%;background:#333"></div>
<div class="t b" style="left:712px;top:177px">Continue</div>
<div class="rad" style="left:775px;top:176px"></div>
<div class="t b" style="left:793px;top:177px;letter-spacing:-0.12px">Start Next Thread Loop</div>
<div class="rad" style="left:936px;top:176px"></div>
<div class="t b" style="left:954px;top:177px;letter-spacing:-0.12px">Stop Thread</div>
<div class="rad" style="left:1035px;top:176px"></div>
<div class="t b" style="left:1053px;top:177px">Stop Test</div>
<div class="rad" style="left:1119px;top:176px"></div>
<div class="t b" style="left:1137px;top:177px">Stop Test Now</div>

<div class="etch" style="left:409px;top:216px;width:1094px;height:146px"></div>
<div class="a" style="left:414px;top:212px;width:107px;height:8px;background:#ededed"></div>
<div class="t b" style="left:416px;top:212px">Thread Properties</div>
<div class="t b" style="left:413px;top:232px">Number of Threads (users):</div>
<div class="fld" style="left:574px;top:227px;width:925px;height:19px"></div>
<svg class="a" style="left:576px;top:233px" width="7" height="10" viewBox="0 0 7 10"><path d="M4.5 1.1 V9" stroke="#2a2a3a" stroke-width="1.15"/><path d="M1.3 3.4 Q3 2.7 4.3 1.2" stroke="#2a2a3a" stroke-width="1" fill="none"/></svg>
<div class="t b" style="left:413px;top:257px;letter-spacing:-0.1px">Ramp-Up Period (in seconds):</div>
<div class="fld" style="left:586px;top:252px;width:913px;height:19px"></div>
<svg class="a" style="left:588px;top:258px" width="7" height="10" viewBox="0 0 7 10"><path d="M4.5 1.1 V9" stroke="#2a2a3a" stroke-width="1.15"/><path d="M1.3 3.4 Q3 2.7 4.3 1.2" stroke="#2a2a3a" stroke-width="1" fill="none"/></svg>
<div class="t b" style="left:413px;top:284px;letter-spacing:-0.1px">Loop Count:</div>
<div class="chk" style="left:489px;top:283px"></div>
<div class="t b" style="left:506px;top:284px">Forever</div>
<div class="fld" style="left:558px;top:277px;width:941px;height:23px"></div>
<svg class="a" style="left:560px;top:285px" width="7" height="10" viewBox="0 0 7 10"><path d="M4.5 1.1 V9" stroke="#2a2a3a" stroke-width="1.15"/><path d="M1.3 3.4 Q3 2.7 4.3 1.2" stroke="#2a2a3a" stroke-width="1" fill="none"/></svg>
<div class="chk" style="left:417px;top:312px"></div>
<div class="t b" style="left:434px;top:313px;letter-spacing:-0.08px">Delay Thread creation until needed</div>
<div class="chk" style="left:417px;top:341px"></div>
<div class="t b" style="left:434px;top:342px">Scheduler</div>

</body></html>
